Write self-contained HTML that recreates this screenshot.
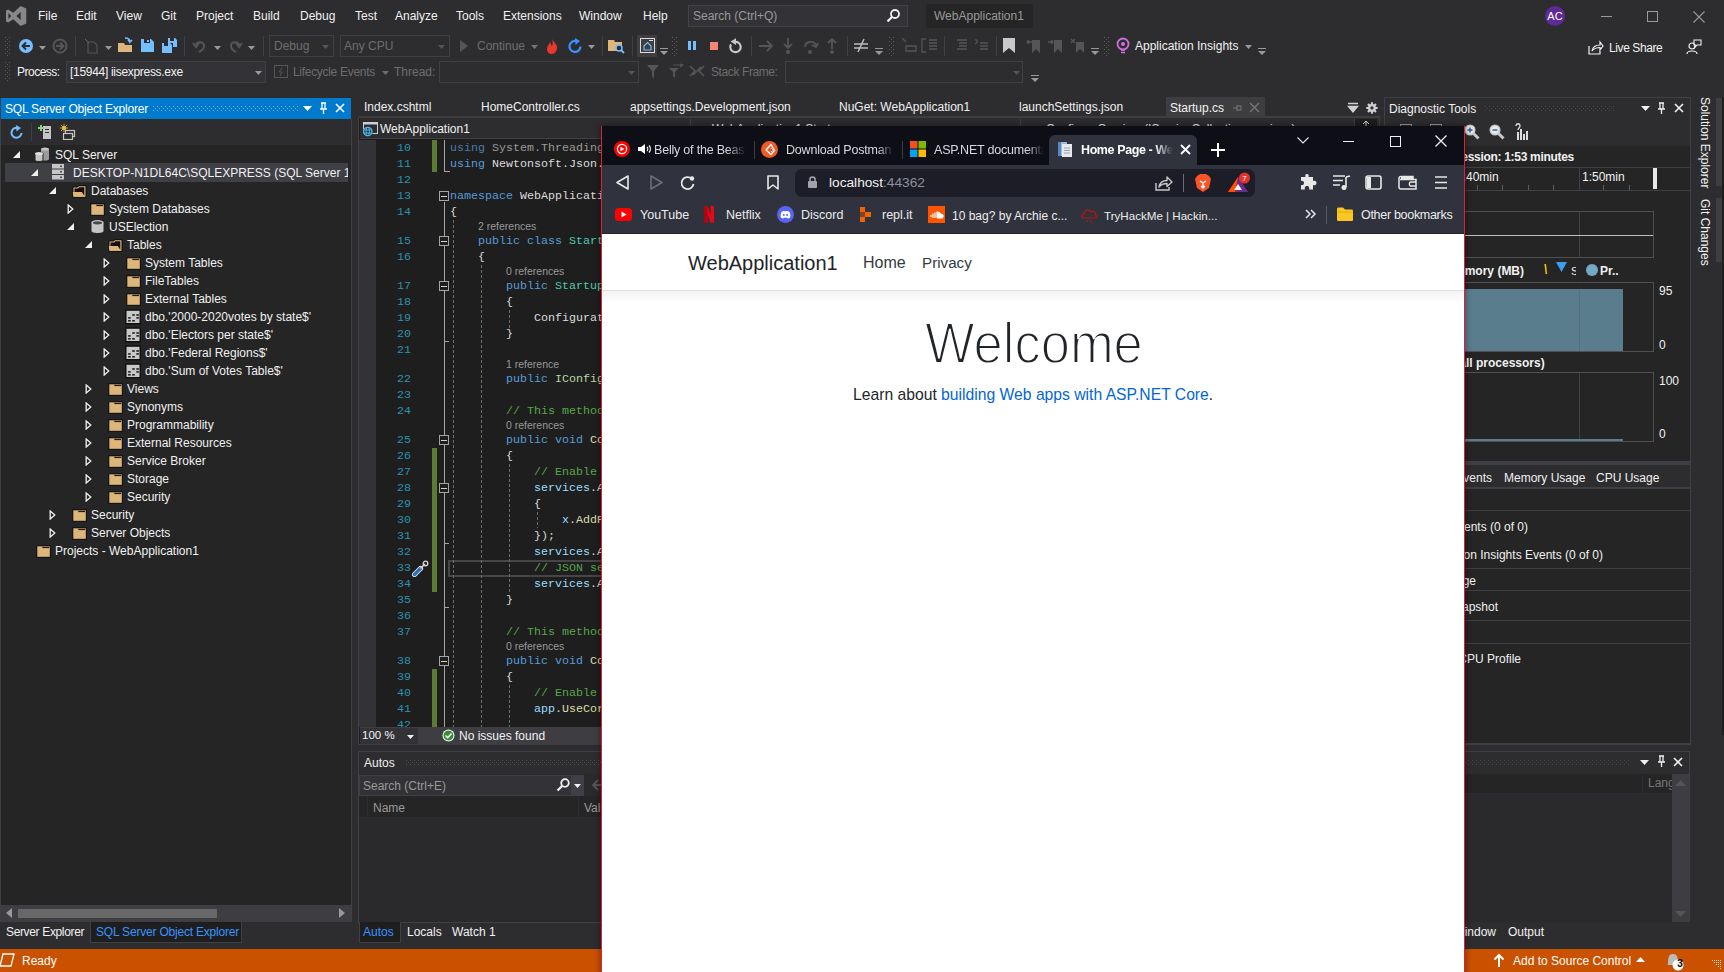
<!DOCTYPE html><html><head><meta charset="utf-8"><title>VS</title><style>
*{margin:0;padding:0;box-sizing:border-box}
html,body{width:1724px;height:972px;overflow:hidden;background:#2d2d30;font-family:"Liberation Sans",sans-serif}
.t{position:absolute;white-space:pre;font-family:"Liberation Sans",sans-serif}
.m{position:absolute;white-space:pre;font-family:"Liberation Mono",monospace}
.r{position:absolute}
</style></head><body>
<svg class="r" style="left:6px;top:6px;" width="21" height="20" viewBox="0 0 21 20"><path d="M14.6 0 L20.3 2.6 V17.4 L14.6 20 L7.3 13.3 L2.2 16.6 L0 15.4 V4.6 L2.2 3.4 L7.3 6.7 Z M14.6 6 L10.4 10 L14.6 14 Z M2.4 7 V13 L5.2 10 Z" fill="#878787" fill-rule="evenodd"/></svg>
<div class="t" style="left:38px;top:7.0px;height:18px;line-height:18px;font-size:12px;color:#f1f1f1;">File</div>
<div class="t" style="left:76px;top:7.0px;height:18px;line-height:18px;font-size:12px;color:#f1f1f1;">Edit</div>
<div class="t" style="left:116px;top:7.0px;height:18px;line-height:18px;font-size:12px;color:#f1f1f1;">View</div>
<div class="t" style="left:161px;top:7.0px;height:18px;line-height:18px;font-size:12px;color:#f1f1f1;">Git</div>
<div class="t" style="left:196px;top:7.0px;height:18px;line-height:18px;font-size:12px;color:#f1f1f1;">Project</div>
<div class="t" style="left:253px;top:7.0px;height:18px;line-height:18px;font-size:12px;color:#f1f1f1;">Build</div>
<div class="t" style="left:300px;top:7.0px;height:18px;line-height:18px;font-size:12px;color:#f1f1f1;">Debug</div>
<div class="t" style="left:355px;top:7.0px;height:18px;line-height:18px;font-size:12px;color:#f1f1f1;">Test</div>
<div class="t" style="left:395px;top:7.0px;height:18px;line-height:18px;font-size:12px;color:#f1f1f1;">Analyze</div>
<div class="t" style="left:456px;top:7.0px;height:18px;line-height:18px;font-size:12px;color:#f1f1f1;">Tools</div>
<div class="t" style="left:503px;top:7.0px;height:18px;line-height:18px;font-size:12px;color:#f1f1f1;">Extensions</div>
<div class="t" style="left:579px;top:7.0px;height:18px;line-height:18px;font-size:12px;color:#f1f1f1;">Window</div>
<div class="t" style="left:643px;top:7.0px;height:18px;line-height:18px;font-size:12px;color:#f1f1f1;">Help</div>
<div class="r" style="left:688px;top:5px;width:220px;height:22px;background:#333337;border:1px solid #434346"></div>
<div class="t" style="left:693px;top:7.0px;height:18px;line-height:18px;font-size:12px;color:#999999;">Search (Ctrl+Q)</div>
<svg class="r" style="left:885px;top:8px;" width="16" height="16" viewBox="0 0 16 16"><circle cx="10" cy="6" r="4" fill="none" stroke="#f1f1f1" stroke-width="1.8"/><path d="M7.2 8.8 L2.5 13.5" stroke="#f1f1f1" stroke-width="2.2"/></svg>
<div class="r" style="left:926px;top:4px;width:107px;height:24px;background:#252526;"></div>
<div class="t" style="left:934px;top:7.0px;height:18px;line-height:18px;font-size:12px;color:#999999;">WebApplication1</div>
<div class="r" style="left:1545px;top:6px;width:20px;height:20px;border-radius:10px;background:#5f2a96"></div>
<div class="t" style="left:1545px;top:7.5px;height:17px;line-height:17px;font-size:11px;color:#ffffff;width:20px;text-align:center">AC</div>
<div class="r" style="left:1601px;top:16px;width:11px;height:1px;background:#999;"></div>
<div class="r" style="left:1647px;top:11px;width:11px;height:11px;background:transparent;border:1px solid #999"></div>
<svg class="r" style="left:1693px;top:11px;" width="12" height="12" viewBox="0 0 12 12"><path d="M0.5 0.5 L11.5 11.5 M11.5 0.5 L0.5 11.5" stroke="#999" stroke-width="1.1"/></svg>
<svg class="r" style="left:5px;top:37px;" width="5" height="20" viewBox="0 0 5 20"><defs><pattern id="g1" width="4" height="4" patternUnits="userSpaceOnUse"><rect x="0" y="0" width="1" height="1" fill="#5a5a5e"/><rect x="2" y="2" width="1" height="1" fill="#5a5a5e"/></pattern></defs><rect width="5" height="20" fill="url(#g1)"/></svg>
<svg class="r" style="left:18px;top:38px;" width="16" height="16" viewBox="0 0 16 16"><circle cx="8" cy="8" r="7" fill="#75beff"/><path d="M12 8 H5 M8 4.5 L4.5 8 L8 11.5" stroke="#2d2d30" stroke-width="2" fill="none"/></svg>
<svg class="r" style="left:39px;top:46px;" width="7" height="4" viewBox="0 0 7 4"><path d="M0 0 H7 L3.5 4 Z" fill="#999"/></svg>
<svg class="r" style="left:52px;top:38px;" width="16" height="16" viewBox="0 0 16 16"><circle cx="8" cy="8" r="6.5" fill="none" stroke="#555" stroke-width="2"/><path d="M4 8 H11 M8 4.5 L11.5 8 L8 11.5" stroke="#555" stroke-width="2" fill="none"/></svg>
<div class="r" style="left:75px;top:36px;width:1px;height:20px;background:#3f3f46;"></div>
<svg class="r" style="left:83px;top:38px;" width="16" height="16" viewBox="0 0 16 16"><path d="M5 4 H11 L14 7 V15 H5 Z" fill="none" stroke="#555" stroke-width="1.2"/><path d="M2 1 L6 5" stroke="#666"/></svg>
<svg class="r" style="left:105px;top:46px;" width="7" height="4" viewBox="0 0 7 4"><path d="M0 0 H7 L3.5 4 Z" fill="#999"/></svg>
<svg class="r" style="left:117px;top:37px;" width="18" height="17" viewBox="0 0 18 17"><path d="M1 6 H7 L8 8 H15 V15 H1 Z" fill="#dcb67a"/><path d="M8 1 C11 1 13 2 13 5 L15 3 M13 5 L11 3" stroke="#75beff" stroke-width="1.6" fill="none"/></svg>
<svg class="r" style="left:140px;top:38px;" width="15" height="15" viewBox="0 0 15 15"><path d="M1 1 H11 L14 4 V14 H1 Z" fill="#75beff"/><rect x="4" y="1" width="6" height="4" fill="#2d2d30"/><rect x="7" y="2" width="2" height="2" fill="#75beff"/></svg>
<svg class="r" style="left:161px;top:37px;" width="17" height="17" viewBox="0 0 17 17"><path d="M1 6 H9 L11 8 V16 H1 Z" fill="#75beff"/><path d="M7 1 H14 L16 3 V10 H12 V6 H7 Z" fill="#75beff"/><rect x="3" y="6" width="4" height="3" fill="#2d2d30"/><rect x="9" y="1" width="4" height="3" fill="#2d2d30"/></svg>
<div class="r" style="left:184px;top:36px;width:1px;height:20px;background:#3f3f46;"></div>
<svg class="r" style="left:192px;top:38px;" width="16" height="16" viewBox="0 0 16 16"><path d="M4 8 C4 3 12 3 12 8 C12 11 9 13 7 14" stroke="#555" stroke-width="2" fill="none"/><path d="M1 5 L4 9 L7 5" stroke="#555" stroke-width="2" fill="none"/></svg>
<svg class="r" style="left:214px;top:46px;" width="7" height="4" viewBox="0 0 7 4"><path d="M0 0 H7 L3.5 4 Z" fill="#999"/></svg>
<svg class="r" style="left:227px;top:38px;" width="16" height="16" viewBox="0 0 16 16"><path d="M12 8 C12 3 4 3 4 8 C4 11 7 13 9 14" stroke="#555" stroke-width="2" fill="none"/><path d="M9 5 L12 9 L15 5" stroke="#555" stroke-width="2" fill="none"/></svg>
<svg class="r" style="left:248px;top:46px;" width="7" height="4" viewBox="0 0 7 4"><path d="M0 0 H7 L3.5 4 Z" fill="#999"/></svg>
<div class="r" style="left:263px;top:36px;width:1px;height:20px;background:#3f3f46;"></div>
<div class="r" style="left:269px;top:35px;width:65px;height:22px;background:#2d2d30;border:1px solid #3f3f46"></div>
<div class="t" style="left:274px;top:37.0px;height:18px;line-height:18px;font-size:12px;color:#6d6d6d;">Debug</div>
<svg class="r" style="left:322px;top:45px;" width="7" height="4" viewBox="0 0 7 4"><path d="M0 0 H7 L3.5 4 Z" fill="#555"/></svg>
<div class="r" style="left:340px;top:35px;width:110px;height:22px;background:#2d2d30;border:1px solid #3f3f46"></div>
<div class="t" style="left:344px;top:37.0px;height:18px;line-height:18px;font-size:12px;color:#6d6d6d;">Any CPU</div>
<svg class="r" style="left:438px;top:45px;" width="7" height="4" viewBox="0 0 7 4"><path d="M0 0 H7 L3.5 4 Z" fill="#555"/></svg>
<svg class="r" style="left:459px;top:39px;" width="10" height="14" viewBox="0 0 10 14"><path d="M1 1 L9 7 L1 13 Z" fill="#555"/></svg>
<div class="t" style="left:477px;top:37.0px;height:18px;line-height:18px;font-size:12px;color:#6d6d6d;">Continue</div>
<svg class="r" style="left:531px;top:45px;" width="7" height="4" viewBox="0 0 7 4"><path d="M0 0 H7 L3.5 4 Z" fill="#777"/></svg>
<svg class="r" style="left:544px;top:37px;" width="16" height="18" viewBox="0 0 16 18"><path d="M8 1 C9 5 14 7 13 12 C12.5 15 10 17 8 17 C5 17 3 15 3 12 C3 9 5 8 6 5 C7 7 7 8 8 9 C9 7 9 4 8 1 Z" fill="#e8372c"/></svg>
<svg class="r" style="left:567px;top:38px;" width="17" height="17" viewBox="0 0 17 17"><path d="M13.5 8.5 A5.5 5.5 0 1 1 10 3.3" stroke="#3794ff" stroke-width="2.2" fill="none"/><path d="M8 0 L13 3 L8.5 7 Z" fill="#3794ff"/></svg>
<svg class="r" style="left:588px;top:45px;" width="7" height="4" viewBox="0 0 7 4"><path d="M0 0 H7 L3.5 4 Z" fill="#999"/></svg>
<div class="r" style="left:602px;top:36px;width:1px;height:20px;background:#3f3f46;"></div>
<svg class="r" style="left:607px;top:37px;" width="18" height="17" viewBox="0 0 18 17"><path d="M1 3 H7 L8 5 H15 V14 H1 Z" fill="#dcb67a"/><circle cx="12" cy="11" r="3" fill="#2d2d30" stroke="#75beff" stroke-width="1.5"/><path d="M14 13 L17 16" stroke="#75beff" stroke-width="1.8"/></svg>
<div class="r" style="left:632px;top:36px;width:1px;height:20px;background:#3f3f46;"></div>
<div class="r" style="left:637px;top:35px;width:20px;height:22px;background:#3e3e40;"></div>
<svg class="r" style="left:640px;top:38px;" width="15" height="15" viewBox="0 0 15 15"><rect x="0.5" y="0.5" width="14" height="14" fill="none" stroke="#ddd"/><path d="M4 8 L7.5 4.5 L11 8 V12 H4 Z" fill="none" stroke="#75beff" stroke-width="1.2"/><rect x="9" y="2" width="4" height="1" fill="#ddd"/></svg>
<svg class="r" style="left:660px;top:48px;" width="8" height="8" viewBox="0 0 8 8"><rect x="0" y="0" width="8" height="1" fill="#999"/><path d="M0 3 H8 L4 7 Z" fill="#999"/></svg>
<svg class="r" style="left:672px;top:37px;" width="5" height="20" viewBox="0 0 5 20"><defs><pattern id="g2" width="4" height="4" patternUnits="userSpaceOnUse"><rect x="0" y="0" width="1" height="1" fill="#5a5a5e"/><rect x="2" y="2" width="1" height="1" fill="#5a5a5e"/></pattern></defs><rect width="5" height="20" fill="url(#g2)"/></svg>
<div class="r" style="left:688px;top:41px;width:3px;height:9px;background:#75beff;"></div>
<div class="r" style="left:693px;top:41px;width:3px;height:9px;background:#75beff;"></div>
<div class="r" style="left:710px;top:42px;width:8px;height:8px;background:#f48771;"></div>
<svg class="r" style="left:727px;top:37px;" width="17" height="18" viewBox="0 0 17 18"><circle cx="8.5" cy="10" r="5.2" fill="none" stroke="#c8c8c8" stroke-width="2.2" stroke-dasharray="27 6" transform="rotate(-95 8.5 10)"/><path d="M3.5 4.6 L9 1.2 L9 8 Z" fill="#c8c8c8"/></svg>
<div class="r" style="left:751px;top:36px;width:1px;height:20px;background:#3f3f46;"></div>
<svg class="r" style="left:758px;top:39px;" width="16" height="14" viewBox="0 0 16 14"><path d="M1 7 H14 M9 2 L14 7 L9 12" stroke="#555" stroke-width="1.8" fill="none"/></svg>
<svg class="r" style="left:781px;top:37px;" width="14" height="18" viewBox="0 0 14 18"><path d="M7 1 V11 M3 7 L7 11 L11 7" stroke="#555" stroke-width="1.8" fill="none"/><circle cx="7" cy="15" r="2" fill="#555"/></svg>
<svg class="r" style="left:802px;top:37px;" width="17" height="18" viewBox="0 0 17 18"><path d="M3 10 C3 4 13 3 14 9 M10 8 L14 10 L16 6" stroke="#555" stroke-width="1.8" fill="none"/><circle cx="8" cy="15" r="2" fill="#555"/></svg>
<svg class="r" style="left:825px;top:37px;" width="14" height="18" viewBox="0 0 14 18"><path d="M7 12 V2 M3 6 L7 2 L11 6" stroke="#555" stroke-width="1.8" fill="none"/><circle cx="7" cy="15" r="2" fill="#555"/></svg>
<div class="r" style="left:847px;top:36px;width:1px;height:20px;background:#3f3f46;"></div>
<svg class="r" style="left:852px;top:37px;" width="18" height="17" viewBox="0 0 18 17"><path d="M2 7 H16 M2 11 H16 M6 15 L12 2" stroke="#bbb" stroke-width="1.5" fill="none"/></svg>
<svg class="r" style="left:875px;top:48px;" width="8" height="8" viewBox="0 0 8 8"><rect x="0" y="0" width="8" height="1" fill="#999"/><path d="M0 3 H8 L4 7 Z" fill="#999"/></svg>
<svg class="r" style="left:889px;top:37px;" width="5" height="20" viewBox="0 0 5 20"><defs><pattern id="g3" width="4" height="4" patternUnits="userSpaceOnUse"><rect x="0" y="0" width="1" height="1" fill="#5a5a5e"/><rect x="2" y="2" width="1" height="1" fill="#5a5a5e"/></pattern></defs><rect width="5" height="20" fill="url(#g3)"/></svg>
<svg class="r" style="left:900px;top:37px;" width="17" height="17" viewBox="0 0 17 17"><path d="M2 1 L6 5 M6 9 H16 V14 H6 Z" stroke="#555" stroke-width="1.3" fill="none"/></svg>
<svg class="r" style="left:921px;top:37px;" width="17" height="17" viewBox="0 0 17 17"><path d="M5 2 H1 V15 H5 M8 3 H16 M8 6 H16 M8 9 H16 M8 12 H16" stroke="#555" stroke-width="1.3" fill="none"/></svg>
<div class="r" style="left:944px;top:36px;width:1px;height:20px;background:#3f3f46;"></div>
<svg class="r" style="left:952px;top:37px;" width="17" height="17" viewBox="0 0 17 17"><path d="M5 3 H15 M7 6 H15 M7 9 H15 M5 12 H15" stroke="#555" stroke-width="1.3" fill="none"/></svg>
<svg class="r" style="left:973px;top:37px;" width="17" height="17" viewBox="0 0 17 17"><path d="M7 6 H15 M7 9 H15 M7 12 H15 M2 3 C5 2 5 6 2 7" stroke="#555" stroke-width="1.3" fill="none"/></svg>
<div class="r" style="left:996px;top:36px;width:1px;height:20px;background:#3f3f46;"></div>
<svg class="r" style="left:1003px;top:38px;" width="12" height="15" viewBox="0 0 12 15"><path d="M0 0 H12 V15 L6 10 L0 15 Z" fill="#c8c8c8"/></svg>
<svg class="r" style="left:1026px;top:38px;" width="16" height="15" viewBox="0 0 16 15"><path d="M6 2 V15 L10 11 L14 15 V2 Z" fill="#555"/><path d="M1 4 H6 M3 2 L1 4 L3 6" stroke="#555" stroke-width="1.3" fill="none"/></svg>
<svg class="r" style="left:1048px;top:38px;" width="16" height="15" viewBox="0 0 16 15"><path d="M6 2 V15 L10 11 L14 15 V2 Z" fill="#555"/><path d="M0 4 H5 M3 2 L5 4 L3 6" stroke="#555" stroke-width="1.3" fill="none"/></svg>
<svg class="r" style="left:1070px;top:38px;" width="16" height="15" viewBox="0 0 16 15"><path d="M6 4 V15 L10 11 L14 15 V4 Z" fill="#555"/><path d="M1 1 L5 5 M5 1 L1 5" stroke="#555" stroke-width="1.3" fill="none"/></svg>
<svg class="r" style="left:1091px;top:48px;" width="8" height="8" viewBox="0 0 8 8"><rect x="0" y="0" width="8" height="1" fill="#999"/><path d="M0 3 H8 L4 7 Z" fill="#999"/></svg>
<svg class="r" style="left:1104px;top:37px;" width="5" height="20" viewBox="0 0 5 20"><defs><pattern id="g4" width="4" height="4" patternUnits="userSpaceOnUse"><rect x="0" y="0" width="1" height="1" fill="#5a5a5e"/><rect x="2" y="2" width="1" height="1" fill="#5a5a5e"/></pattern></defs><rect width="5" height="20" fill="url(#g4)"/></svg>
<svg class="r" style="left:1116px;top:37px;" width="14" height="18" viewBox="0 0 14 18"><circle cx="7" cy="7" r="5.5" fill="none" stroke="#d16fe0" stroke-width="1.8"/><circle cx="7" cy="7" r="2" fill="#d16fe0"/><path d="M5 13 H9 M5 15.5 H9" stroke="#d16fe0" stroke-width="1.5"/></svg>
<div class="t" style="left:1135px;top:37.0px;height:18px;line-height:18px;font-size:12px;color:#f1f1f1;">Application Insights</div>
<svg class="r" style="left:1245px;top:45px;" width="7" height="4" viewBox="0 0 7 4"><path d="M0 0 H7 L3.5 4 Z" fill="#999"/></svg>
<svg class="r" style="left:1258px;top:48px;" width="8" height="8" viewBox="0 0 8 8"><rect x="0" y="0" width="8" height="1" fill="#999"/><path d="M0 3 H8 L4 7 Z" fill="#999"/></svg>
<svg class="r" style="left:1588px;top:40px;" width="16" height="15" viewBox="0 0 16 15"><path d="M1 6 V14 H12 V11" stroke="#f1f1f1" stroke-width="1.2" fill="none"/><path d="M4 11 C5 6 9 5 12 5 V2 L15 6 L12 10 V7.5 C9 7.5 6 8.5 4 11 Z" fill="none" stroke="#f1f1f1" stroke-width="1.2"/></svg>
<div class="t" style="left:1609px;top:39.0px;height:18px;line-height:18px;font-size:12px;color:#f1f1f1;letter-spacing:-0.4px">Live Share</div>
<svg class="r" style="left:1686px;top:39px;" width="16" height="16" viewBox="0 0 16 16"><circle cx="6" cy="7" r="3" fill="none" stroke="#f1f1f1" stroke-width="1.2"/><path d="M1 15 C1 11 11 11 11 15" stroke="#f1f1f1" stroke-width="1.2" fill="none"/><path d="M8 1 H15 V6 H11 L9 8 V6 H8 Z" fill="none" stroke="#f1f1f1" stroke-width="1.1"/></svg>
<svg class="r" style="left:5px;top:62px;" width="5" height="20" viewBox="0 0 5 20"><defs><pattern id="g5" width="4" height="4" patternUnits="userSpaceOnUse"><rect x="0" y="0" width="1" height="1" fill="#5a5a5e"/><rect x="2" y="2" width="1" height="1" fill="#5a5a5e"/></pattern></defs><rect width="5" height="20" fill="url(#g5)"/></svg>
<div class="t" style="left:17px;top:63.0px;height:18px;line-height:18px;font-size:12px;color:#f1f1f1;letter-spacing:-0.5px">Process:</div>
<div class="r" style="left:66px;top:61px;width:200px;height:22px;background:#333337;border:1px solid #3f3f46"></div>
<div class="t" style="left:70px;top:63.0px;height:18px;line-height:18px;font-size:12px;color:#f1f1f1;letter-spacing:-0.3px">[15944] iisexpress.exe</div>
<svg class="r" style="left:255px;top:71px;" width="7" height="4" viewBox="0 0 7 4"><path d="M0 0 H7 L3.5 4 Z" fill="#999"/></svg>
<svg class="r" style="left:274px;top:65px;" width="14" height="13" viewBox="0 0 14 13"><rect x="0.5" y="0.5" width="13" height="12" fill="none" stroke="#555"/><path d="M8 3 L5 7 H8 L6 11" stroke="#555" fill="none"/></svg>
<div class="t" style="left:293px;top:63.0px;height:18px;line-height:18px;font-size:12px;color:#6d6d6d;letter-spacing:-0.3px">Lifecycle Events</div>
<svg class="r" style="left:382px;top:71px;" width="7" height="4" viewBox="0 0 7 4"><path d="M0 0 H7 L3.5 4 Z" fill="#6d6d6d"/></svg>
<div class="t" style="left:394px;top:63.0px;height:18px;line-height:18px;font-size:12px;color:#6d6d6d;">Thread:</div>
<div class="r" style="left:439px;top:61px;width:200px;height:22px;background:#2d2d30;border:1px solid #3f3f46"></div>
<svg class="r" style="left:628px;top:71px;" width="7" height="4" viewBox="0 0 7 4"><path d="M0 0 H7 L3.5 4 Z" fill="#555"/></svg>
<svg class="r" style="left:646px;top:64px;" width="14" height="16" viewBox="0 0 14 16"><path d="M1 1 H13 L8 7 V15 L6 12 V7 Z" fill="#555"/></svg>
<svg class="r" style="left:668px;top:63px;" width="16" height="16" viewBox="0 0 16 16"><path d="M1 5 H11 L7 9 V15 L5 13 V9 Z" fill="#555"/><path d="M5 2 H15 M12 1 L15 2 L12 4" stroke="#555" stroke-width="1.2" fill="none"/></svg>
<svg class="r" style="left:689px;top:65px;" width="16" height="12" viewBox="0 0 16 12"><path d="M1 1 L6 6 L1 11 M15 1 L10 6 L15 11 M4 10 L12 2" stroke="#555" stroke-width="1.6" fill="none"/></svg>
<div class="t" style="left:711px;top:63.0px;height:18px;line-height:18px;font-size:12px;color:#6d6d6d;letter-spacing:-0.4px">Stack Frame:</div>
<div class="r" style="left:785px;top:61px;width:238px;height:22px;background:#2d2d30;border:1px solid #3f3f46"></div>
<svg class="r" style="left:1013px;top:71px;" width="7" height="4" viewBox="0 0 7 4"><path d="M0 0 H7 L3.5 4 Z" fill="#555"/></svg>
<svg class="r" style="left:1031px;top:75px;" width="8" height="8" viewBox="0 0 8 8"><rect x="0" y="0" width="8" height="1" fill="#999"/><path d="M0 3 H8 L4 7 Z" fill="#999"/></svg>
<div class="r" style="left:1px;top:98px;width:350px;height:21px;background:#007acc;"></div>
<div class="t" style="left:5px;top:99.5px;height:18px;line-height:18px;font-size:12px;color:#ffffff;letter-spacing:-0.2px">SQL Server Object Explorer</div>
<svg class="r" style="left:153px;top:106px;" width="145" height="5" viewBox="0 0 145 5"><defs><pattern id="g6" width="4" height="4" patternUnits="userSpaceOnUse"><rect x="0" y="0" width="1" height="1" fill="#6aaee0"/><rect x="2" y="2" width="1" height="1" fill="#6aaee0"/></pattern></defs><rect width="145" height="5" fill="url(#g6)"/></svg>
<svg class="r" style="left:303px;top:106px;" width="9" height="5" viewBox="0 0 9 5"><path d="M0 0 H9 L4.5 5 Z" fill="#fff"/></svg>
<svg class="r" style="left:319px;top:102px;" width="9" height="13" viewBox="0 0 9 13"><path d="M2 1 H7 M3 1 V7 M6 1 V7 M1 7 H8 M4.5 7 V12" stroke="#fff" stroke-width="1.3" fill="none"/></svg>
<svg class="r" style="left:335px;top:103px;" width="10" height="10" viewBox="0 0 10 10"><path d="M1 1 L9 9 M9 1 L1 9" stroke="#fff" stroke-width="1.6"/></svg>
<div class="r" style="left:1px;top:119px;width:350px;height:26px;background:#2d2d30;"></div>
<svg class="r" style="left:9px;top:125px;" width="15" height="15" viewBox="0 0 15 15"><path d="M12.5 8 A5 5 0 1 1 9 3" stroke="#75beff" stroke-width="2" fill="none"/><path d="M7 0 L12 3 L7.5 6.5 Z" fill="#75beff"/></svg>
<div class="r" style="left:31px;top:123px;width:1px;height:18px;background:#3f3f46;"></div>
<svg class="r" style="left:38px;top:124px;" width="14" height="16" viewBox="0 0 14 16"><rect x="5" y="2" width="8" height="13" fill="#c5c5c5"/><rect x="7" y="5" width="4" height="1" fill="#2d2d30"/><rect x="7" y="8" width="4" height="1" fill="#2d2d30"/><path d="M0 4 H6 M3 1 V7" stroke="#89d185" stroke-width="2"/></svg>
<svg class="r" style="left:60px;top:124px;" width="16" height="16" viewBox="0 0 16 16"><circle cx="4" cy="4" r="2" fill="#f0c040"/><path d="M4 0 V8 M0 4 H8 M1 1 L7 7 M7 1 L1 7" stroke="#f0c040" stroke-width=".8"/><rect x="5.5" y="6.5" width="9" height="6" fill="none" stroke="#c5c5c5" stroke-width="1.2"/><rect x="3.5" y="9.5" width="9" height="6" fill="#2d2d30" stroke="#c5c5c5" stroke-width="1.2"/></svg>
<div class="r" style="left:1px;top:145px;width:350px;height:760px;background:#252526;"></div>
<div class="r" style="left:0px;top:98px;width:1px;height:845px;background:#3f3f46;"></div>
<div class="r" style="left:351px;top:119px;width:1px;height:803px;background:#3f3f46;"></div>
<div class="r" style="left:5px;top:163px;width:343px;height:19px;background:#3f3f46;"></div>
<svg class="r" style="left:13px;top:151px;" width="8" height="8" viewBox="0 0 8 8"><path d="M7 0 V7 H0 Z" fill="#f0f0f0"/></svg>
<svg class="r" style="left:34px;top:146px;" width="16" height="16" viewBox="0 0 16 16"><path d="M7 3 V13 C7 15 15 15 15 13 V3 Z" fill="#9a9a9a"/><ellipse cx="11" cy="3" rx="4" ry="1.6" fill="#c5c5c5"/><path d="M1 7 V14 C1 16 9 16 9 14 V7 Z" fill="#c5c5c5" stroke="#252526" stroke-width="1"/><ellipse cx="5" cy="7.5" rx="4" ry="1.6" fill="#e0e0e0"/></svg>
<div class="t" style="left:55px;top:146.0px;height:18px;line-height:18px;font-size:12px;color:#f1f1f1;">SQL Server</div>
<svg class="r" style="left:31px;top:169px;" width="8" height="8" viewBox="0 0 8 8"><path d="M7 0 V7 H0 Z" fill="#f0f0f0"/></svg>
<svg class="r" style="left:52px;top:164px;" width="12" height="16" viewBox="0 0 12 16"><rect x="0" y="0" width="12" height="4.5" fill="#c5c5c5"/><rect x="0" y="5.5" width="12" height="4.5" fill="#c5c5c5"/><rect x="0" y="11" width="12" height="4.5" fill="#c5c5c5"/><rect x="8" y="1.5" width="2" height="1.5" fill="#555"/><rect x="8" y="7" width="2" height="1.5" fill="#555"/><rect x="8" y="12.5" width="2" height="1.5" fill="#555"/></svg>
<div class="t" style="left:73px;top:164.0px;height:18px;line-height:18px;font-size:12px;color:#f1f1f1;width:275px;overflow:hidden">DESKTOP-N1DL64C\SQLEXPRESS (SQL Server 15.0.2000 - DESKTOP-N1DL64C\Archie)</div>
<svg class="r" style="left:49px;top:187px;" width="8" height="8" viewBox="0 0 8 8"><path d="M7 0 V7 H0 Z" fill="#f0f0f0"/></svg>
<svg class="r" style="left:72px;top:185px;" width="15" height="13" viewBox="0 0 15 13"><path d="M0.5 1.5 H5 L6.5 0.2 H14.5 V12.8 H0.5 Z" fill="#111"/><path d="M1.5 2.5 H5.5 L7 1.2 H13.5 V11.8 H1.5 Z" fill="#dcb67a"/><path d="M2.5 3.5 H6 L7.5 2.2 H12.3 V10.8 H2.5 Z" fill="#1a0a14"/><path d="M0.8 7 H9.8 L13 11.8 H1.5 Z" fill="#dcb67a"/></svg>
<div class="t" style="left:91px;top:182.0px;height:18px;line-height:18px;font-size:12px;color:#f1f1f1;">Databases</div>
<svg class="r" style="left:67px;top:204px;" width="7" height="10" viewBox="0 0 7 10"><path d="M1.2 1 L5.8 5 L1.2 9 Z" fill="none" stroke="#f0f0f0" stroke-width="1.3"/></svg>
<svg class="r" style="left:90px;top:203px;" width="15" height="13" viewBox="0 0 15 13"><rect x="0.3" y="0.2" width="14.5" height="12.6" fill="#111"/><rect x="1.3" y="1.3" width="12.5" height="10.5" fill="#dcb67a"/><rect x="6.3" y="1.8" width="6.8" height="1.3" fill="#2a1a08"/></svg>
<div class="t" style="left:109px;top:200.0px;height:18px;line-height:18px;font-size:12px;color:#f1f1f1;">System Databases</div>
<svg class="r" style="left:67px;top:223px;" width="8" height="8" viewBox="0 0 8 8"><path d="M7 0 V7 H0 Z" fill="#f0f0f0"/></svg>
<svg class="r" style="left:90.5px;top:220px;" width="13" height="14" viewBox="0 0 13 14"><path d="M0.5 2.5 V11 C0.5 13.6 12.5 13.6 12.5 11 V2.5 Z" fill="#c5c5c5"/><ellipse cx="6.5" cy="2.5" rx="6" ry="2.4" fill="#c5c5c5"/><ellipse cx="6.5" cy="2.8" rx="4.6" ry="1.6" fill="#4a4a4a"/></svg>
<div class="t" style="left:109px;top:218.0px;height:18px;line-height:18px;font-size:12px;color:#f1f1f1;">USElection</div>
<svg class="r" style="left:85px;top:241px;" width="8" height="8" viewBox="0 0 8 8"><path d="M7 0 V7 H0 Z" fill="#f0f0f0"/></svg>
<svg class="r" style="left:108px;top:239px;" width="15" height="13" viewBox="0 0 15 13"><path d="M0.5 1.5 H5 L6.5 0.2 H14.5 V12.8 H0.5 Z" fill="#111"/><path d="M1.5 2.5 H5.5 L7 1.2 H13.5 V11.8 H1.5 Z" fill="#dcb67a"/><path d="M2.5 3.5 H6 L7.5 2.2 H12.3 V10.8 H2.5 Z" fill="#1a0a14"/><path d="M0.8 7 H9.8 L13 11.8 H1.5 Z" fill="#dcb67a"/></svg>
<div class="t" style="left:127px;top:236.0px;height:18px;line-height:18px;font-size:12px;color:#f1f1f1;">Tables</div>
<svg class="r" style="left:103px;top:258px;" width="7" height="10" viewBox="0 0 7 10"><path d="M1.2 1 L5.8 5 L1.2 9 Z" fill="none" stroke="#f0f0f0" stroke-width="1.3"/></svg>
<svg class="r" style="left:126px;top:257px;" width="15" height="13" viewBox="0 0 15 13"><rect x="0.3" y="0.2" width="14.5" height="12.6" fill="#111"/><rect x="1.3" y="1.3" width="12.5" height="10.5" fill="#dcb67a"/><rect x="6.3" y="1.8" width="6.8" height="1.3" fill="#2a1a08"/></svg>
<div class="t" style="left:145px;top:254.0px;height:18px;line-height:18px;font-size:12px;color:#f1f1f1;">System Tables</div>
<svg class="r" style="left:103px;top:276px;" width="7" height="10" viewBox="0 0 7 10"><path d="M1.2 1 L5.8 5 L1.2 9 Z" fill="none" stroke="#f0f0f0" stroke-width="1.3"/></svg>
<svg class="r" style="left:126px;top:275px;" width="15" height="13" viewBox="0 0 15 13"><rect x="0.3" y="0.2" width="14.5" height="12.6" fill="#111"/><rect x="1.3" y="1.3" width="12.5" height="10.5" fill="#dcb67a"/><rect x="6.3" y="1.8" width="6.8" height="1.3" fill="#2a1a08"/></svg>
<div class="t" style="left:145px;top:272.0px;height:18px;line-height:18px;font-size:12px;color:#f1f1f1;">FileTables</div>
<svg class="r" style="left:103px;top:294px;" width="7" height="10" viewBox="0 0 7 10"><path d="M1.2 1 L5.8 5 L1.2 9 Z" fill="none" stroke="#f0f0f0" stroke-width="1.3"/></svg>
<svg class="r" style="left:126px;top:293px;" width="15" height="13" viewBox="0 0 15 13"><rect x="0.3" y="0.2" width="14.5" height="12.6" fill="#111"/><rect x="1.3" y="1.3" width="12.5" height="10.5" fill="#dcb67a"/><rect x="6.3" y="1.8" width="6.8" height="1.3" fill="#2a1a08"/></svg>
<div class="t" style="left:145px;top:290.0px;height:18px;line-height:18px;font-size:12px;color:#f1f1f1;">External Tables</div>
<svg class="r" style="left:103px;top:312px;" width="7" height="10" viewBox="0 0 7 10"><path d="M1.2 1 L5.8 5 L1.2 9 Z" fill="none" stroke="#f0f0f0" stroke-width="1.3"/></svg>
<svg class="r" style="left:125px;top:309px;" width="16" height="16" viewBox="0 0 16 16"><rect x="0" y="0.3" width="16" height="15.2" fill="#111"/><rect x="1.5" y="1.8" width="13" height="12.2" fill="#c8c8c8"/><rect x="7.2" y="5.2" width="2.6" height="1.6" fill="#222"/><rect x="11.3" y="5.2" width="2.6" height="1.6" fill="#222"/><rect x="3.1" y="8.1" width="2.6" height="1.6" fill="#222"/><rect x="11.3" y="8.1" width="2.6" height="1.6" fill="#222"/><rect x="3.1" y="11" width="2.6" height="1.6" fill="#222"/><rect x="7.2" y="11" width="2.6" height="1.6" fill="#222"/></svg>
<div class="t" style="left:145px;top:308.0px;height:18px;line-height:18px;font-size:12px;color:#f1f1f1;">dbo.'2000-2020votes by state$'</div>
<svg class="r" style="left:103px;top:330px;" width="7" height="10" viewBox="0 0 7 10"><path d="M1.2 1 L5.8 5 L1.2 9 Z" fill="none" stroke="#f0f0f0" stroke-width="1.3"/></svg>
<svg class="r" style="left:125px;top:327px;" width="16" height="16" viewBox="0 0 16 16"><rect x="0" y="0.3" width="16" height="15.2" fill="#111"/><rect x="1.5" y="1.8" width="13" height="12.2" fill="#c8c8c8"/><rect x="7.2" y="5.2" width="2.6" height="1.6" fill="#222"/><rect x="11.3" y="5.2" width="2.6" height="1.6" fill="#222"/><rect x="3.1" y="8.1" width="2.6" height="1.6" fill="#222"/><rect x="11.3" y="8.1" width="2.6" height="1.6" fill="#222"/><rect x="3.1" y="11" width="2.6" height="1.6" fill="#222"/><rect x="7.2" y="11" width="2.6" height="1.6" fill="#222"/></svg>
<div class="t" style="left:145px;top:326.0px;height:18px;line-height:18px;font-size:12px;color:#f1f1f1;">dbo.'Electors per state$'</div>
<svg class="r" style="left:103px;top:348px;" width="7" height="10" viewBox="0 0 7 10"><path d="M1.2 1 L5.8 5 L1.2 9 Z" fill="none" stroke="#f0f0f0" stroke-width="1.3"/></svg>
<svg class="r" style="left:125px;top:345px;" width="16" height="16" viewBox="0 0 16 16"><rect x="0" y="0.3" width="16" height="15.2" fill="#111"/><rect x="1.5" y="1.8" width="13" height="12.2" fill="#c8c8c8"/><rect x="7.2" y="5.2" width="2.6" height="1.6" fill="#222"/><rect x="11.3" y="5.2" width="2.6" height="1.6" fill="#222"/><rect x="3.1" y="8.1" width="2.6" height="1.6" fill="#222"/><rect x="11.3" y="8.1" width="2.6" height="1.6" fill="#222"/><rect x="3.1" y="11" width="2.6" height="1.6" fill="#222"/><rect x="7.2" y="11" width="2.6" height="1.6" fill="#222"/></svg>
<div class="t" style="left:145px;top:344.0px;height:18px;line-height:18px;font-size:12px;color:#f1f1f1;">dbo.'Federal Regions$'</div>
<svg class="r" style="left:103px;top:366px;" width="7" height="10" viewBox="0 0 7 10"><path d="M1.2 1 L5.8 5 L1.2 9 Z" fill="none" stroke="#f0f0f0" stroke-width="1.3"/></svg>
<svg class="r" style="left:125px;top:363px;" width="16" height="16" viewBox="0 0 16 16"><rect x="0" y="0.3" width="16" height="15.2" fill="#111"/><rect x="1.5" y="1.8" width="13" height="12.2" fill="#c8c8c8"/><rect x="7.2" y="5.2" width="2.6" height="1.6" fill="#222"/><rect x="11.3" y="5.2" width="2.6" height="1.6" fill="#222"/><rect x="3.1" y="8.1" width="2.6" height="1.6" fill="#222"/><rect x="11.3" y="8.1" width="2.6" height="1.6" fill="#222"/><rect x="3.1" y="11" width="2.6" height="1.6" fill="#222"/><rect x="7.2" y="11" width="2.6" height="1.6" fill="#222"/></svg>
<div class="t" style="left:145px;top:362.0px;height:18px;line-height:18px;font-size:12px;color:#f1f1f1;">dbo.'Sum of Votes Table$'</div>
<svg class="r" style="left:85px;top:384px;" width="7" height="10" viewBox="0 0 7 10"><path d="M1.2 1 L5.8 5 L1.2 9 Z" fill="none" stroke="#f0f0f0" stroke-width="1.3"/></svg>
<svg class="r" style="left:108px;top:383px;" width="15" height="13" viewBox="0 0 15 13"><rect x="0.3" y="0.2" width="14.5" height="12.6" fill="#111"/><rect x="1.3" y="1.3" width="12.5" height="10.5" fill="#dcb67a"/><rect x="6.3" y="1.8" width="6.8" height="1.3" fill="#2a1a08"/></svg>
<div class="t" style="left:127px;top:380.0px;height:18px;line-height:18px;font-size:12px;color:#f1f1f1;">Views</div>
<svg class="r" style="left:85px;top:402px;" width="7" height="10" viewBox="0 0 7 10"><path d="M1.2 1 L5.8 5 L1.2 9 Z" fill="none" stroke="#f0f0f0" stroke-width="1.3"/></svg>
<svg class="r" style="left:108px;top:401px;" width="15" height="13" viewBox="0 0 15 13"><rect x="0.3" y="0.2" width="14.5" height="12.6" fill="#111"/><rect x="1.3" y="1.3" width="12.5" height="10.5" fill="#dcb67a"/><rect x="6.3" y="1.8" width="6.8" height="1.3" fill="#2a1a08"/></svg>
<div class="t" style="left:127px;top:398.0px;height:18px;line-height:18px;font-size:12px;color:#f1f1f1;">Synonyms</div>
<svg class="r" style="left:85px;top:420px;" width="7" height="10" viewBox="0 0 7 10"><path d="M1.2 1 L5.8 5 L1.2 9 Z" fill="none" stroke="#f0f0f0" stroke-width="1.3"/></svg>
<svg class="r" style="left:108px;top:419px;" width="15" height="13" viewBox="0 0 15 13"><rect x="0.3" y="0.2" width="14.5" height="12.6" fill="#111"/><rect x="1.3" y="1.3" width="12.5" height="10.5" fill="#dcb67a"/><rect x="6.3" y="1.8" width="6.8" height="1.3" fill="#2a1a08"/></svg>
<div class="t" style="left:127px;top:416.0px;height:18px;line-height:18px;font-size:12px;color:#f1f1f1;">Programmability</div>
<svg class="r" style="left:85px;top:438px;" width="7" height="10" viewBox="0 0 7 10"><path d="M1.2 1 L5.8 5 L1.2 9 Z" fill="none" stroke="#f0f0f0" stroke-width="1.3"/></svg>
<svg class="r" style="left:108px;top:437px;" width="15" height="13" viewBox="0 0 15 13"><rect x="0.3" y="0.2" width="14.5" height="12.6" fill="#111"/><rect x="1.3" y="1.3" width="12.5" height="10.5" fill="#dcb67a"/><rect x="6.3" y="1.8" width="6.8" height="1.3" fill="#2a1a08"/></svg>
<div class="t" style="left:127px;top:434.0px;height:18px;line-height:18px;font-size:12px;color:#f1f1f1;">External Resources</div>
<svg class="r" style="left:85px;top:456px;" width="7" height="10" viewBox="0 0 7 10"><path d="M1.2 1 L5.8 5 L1.2 9 Z" fill="none" stroke="#f0f0f0" stroke-width="1.3"/></svg>
<svg class="r" style="left:108px;top:455px;" width="15" height="13" viewBox="0 0 15 13"><rect x="0.3" y="0.2" width="14.5" height="12.6" fill="#111"/><rect x="1.3" y="1.3" width="12.5" height="10.5" fill="#dcb67a"/><rect x="6.3" y="1.8" width="6.8" height="1.3" fill="#2a1a08"/></svg>
<div class="t" style="left:127px;top:452.0px;height:18px;line-height:18px;font-size:12px;color:#f1f1f1;">Service Broker</div>
<svg class="r" style="left:85px;top:474px;" width="7" height="10" viewBox="0 0 7 10"><path d="M1.2 1 L5.8 5 L1.2 9 Z" fill="none" stroke="#f0f0f0" stroke-width="1.3"/></svg>
<svg class="r" style="left:108px;top:473px;" width="15" height="13" viewBox="0 0 15 13"><rect x="0.3" y="0.2" width="14.5" height="12.6" fill="#111"/><rect x="1.3" y="1.3" width="12.5" height="10.5" fill="#dcb67a"/><rect x="6.3" y="1.8" width="6.8" height="1.3" fill="#2a1a08"/></svg>
<div class="t" style="left:127px;top:470.0px;height:18px;line-height:18px;font-size:12px;color:#f1f1f1;">Storage</div>
<svg class="r" style="left:85px;top:492px;" width="7" height="10" viewBox="0 0 7 10"><path d="M1.2 1 L5.8 5 L1.2 9 Z" fill="none" stroke="#f0f0f0" stroke-width="1.3"/></svg>
<svg class="r" style="left:108px;top:491px;" width="15" height="13" viewBox="0 0 15 13"><rect x="0.3" y="0.2" width="14.5" height="12.6" fill="#111"/><rect x="1.3" y="1.3" width="12.5" height="10.5" fill="#dcb67a"/><rect x="6.3" y="1.8" width="6.8" height="1.3" fill="#2a1a08"/></svg>
<div class="t" style="left:127px;top:488.0px;height:18px;line-height:18px;font-size:12px;color:#f1f1f1;">Security</div>
<svg class="r" style="left:49px;top:510px;" width="7" height="10" viewBox="0 0 7 10"><path d="M1.2 1 L5.8 5 L1.2 9 Z" fill="none" stroke="#f0f0f0" stroke-width="1.3"/></svg>
<svg class="r" style="left:72px;top:509px;" width="15" height="13" viewBox="0 0 15 13"><rect x="0.3" y="0.2" width="14.5" height="12.6" fill="#111"/><rect x="1.3" y="1.3" width="12.5" height="10.5" fill="#dcb67a"/><rect x="6.3" y="1.8" width="6.8" height="1.3" fill="#2a1a08"/></svg>
<div class="t" style="left:91px;top:506.0px;height:18px;line-height:18px;font-size:12px;color:#f1f1f1;">Security</div>
<svg class="r" style="left:49px;top:528px;" width="7" height="10" viewBox="0 0 7 10"><path d="M1.2 1 L5.8 5 L1.2 9 Z" fill="none" stroke="#f0f0f0" stroke-width="1.3"/></svg>
<svg class="r" style="left:72px;top:527px;" width="15" height="13" viewBox="0 0 15 13"><rect x="0.3" y="0.2" width="14.5" height="12.6" fill="#111"/><rect x="1.3" y="1.3" width="12.5" height="10.5" fill="#dcb67a"/><rect x="6.3" y="1.8" width="6.8" height="1.3" fill="#2a1a08"/></svg>
<div class="t" style="left:91px;top:524.0px;height:18px;line-height:18px;font-size:12px;color:#f1f1f1;">Server Objects</div>
<svg class="r" style="left:36px;top:545px;" width="15" height="13" viewBox="0 0 15 13"><rect x="0.3" y="0.2" width="14.5" height="12.6" fill="#111"/><rect x="1.3" y="1.3" width="12.5" height="10.5" fill="#dcb67a"/><rect x="6.3" y="1.8" width="6.8" height="1.3" fill="#2a1a08"/></svg>
<div class="t" style="left:55px;top:542.0px;height:18px;line-height:18px;font-size:12px;color:#f1f1f1;">Projects - WebApplication1</div>
<div class="r" style="left:1px;top:905px;width:350px;height:17px;background:#3e3e42;"></div>
<svg class="r" style="left:6px;top:908px;" width="6" height="10" viewBox="0 0 6 10"><path d="M6 0 V10 L0 5 Z" fill="#999"/></svg>
<div class="r" style="left:18px;top:909px;width:199px;height:9px;background:#686868;"></div>
<svg class="r" style="left:339px;top:908px;" width="6" height="10" viewBox="0 0 6 10"><path d="M0 0 V10 L6 5 Z" fill="#999"/></svg>
<div class="r" style="left:0px;top:922px;width:352px;height:21px;background:#2d2d30;"></div>
<div class="t" style="left:6px;top:923.0px;height:18px;line-height:18px;font-size:12px;color:#f1f1f1;letter-spacing:-0.35px">Server Explorer</div>
<div class="r" style="left:90px;top:922px;width:152px;height:21px;background:#1e1e1e;border:1px solid #3f3f46;border-top:none"></div>
<div class="t" style="left:96px;top:923.0px;height:18px;line-height:18px;font-size:12px;color:#3794ff;letter-spacing:-0.2px">SQL Server Object Explorer</div>
<div class="t" style="left:364px;top:98.0px;height:18px;line-height:18px;font-size:12px;color:#f1f1f1;">Index.cshtml</div>
<div class="t" style="left:481px;top:98.0px;height:18px;line-height:18px;font-size:12px;color:#f1f1f1;">HomeController.cs</div>
<div class="t" style="left:630px;top:98.0px;height:18px;line-height:18px;font-size:12px;color:#f1f1f1;">appsettings.Development.json</div>
<div class="t" style="left:839px;top:98.0px;height:18px;line-height:18px;font-size:12px;color:#f1f1f1;">NuGet: WebApplication1</div>
<div class="t" style="left:1019px;top:98.0px;height:18px;line-height:18px;font-size:12px;color:#f1f1f1;">launchSettings.json</div>
<div class="r" style="left:1166px;top:97px;width:99px;height:21px;background:#3e3e40;"></div>
<div class="t" style="left:1170px;top:99.0px;height:18px;line-height:18px;font-size:12px;color:#f1f1f1;">Startup.cs</div>
<svg class="r" style="left:1232px;top:103px;" width="10" height="10" viewBox="0 0 10 10"><path d="M1 5 H5 M5 2 V8 M5 3 H9 V7 H5" stroke="#777" stroke-width="1" fill="none"/></svg>
<svg class="r" style="left:1249px;top:102px;" width="11" height="11" viewBox="0 0 11 11"><path d="M1 1 L10 10 M10 1 L1 10" stroke="#777" stroke-width="1.3"/></svg>
<svg class="r" style="left:1347px;top:102px;" width="12" height="12" viewBox="0 0 12 12"><path d="M1 1.5 H11 M1.5 4.5 H10.5 L6 10 Z" stroke="#d0d0d0" fill="#d0d0d0" stroke-width="1.4"/></svg>
<svg class="r" style="left:1365px;top:101px;" width="14" height="14" viewBox="0 0 14 14"><g fill="#d0d0d0" transform="translate(1 1) scale(.85)"><rect x="5.8" y="0.3" width="2.4" height="13.4" transform="rotate(0 7 7)"/><rect x="5.8" y="0.3" width="2.4" height="13.4" transform="rotate(45 7 7)"/><rect x="5.8" y="0.3" width="2.4" height="13.4" transform="rotate(90 7 7)"/><rect x="5.8" y="0.3" width="2.4" height="13.4" transform="rotate(135 7 7)"/><circle cx="7" cy="7" r="4.6"/><circle cx="7" cy="7" r="1.9" fill="#2d2d30"/></g></svg>
<div class="r" style="left:358px;top:117px;width:1022px;height:628px;background:#1e1e1e;border:1px solid #3f3f46"></div>
<div class="r" style="left:360px;top:118px;width:1019px;height:21px;background:#2d2d30;border-bottom:1px solid #3f3f46"></div>
<div class="r" style="left:359px;top:116px;width:1021px;height:2px;background:#3e3e40;"></div>
<div class="r" style="left:1355px;top:119px;width:22px;height:19px;background:#1e1e1e;"></div>
<svg class="r" style="left:363px;top:122px;" width="16" height="15" viewBox="0 0 16 15"><rect x="0.5" y="0.5" width="14" height="11" fill="none" stroke="#d0d0d0"/><rect x="0.5" y="0.5" width="14" height="2" fill="#d0d0d0"/><circle cx="4.8" cy="9.5" r="5" fill="#2d2d30"/><circle cx="4.8" cy="9.5" r="4.2" fill="none" stroke="#4cb6ea" stroke-width="1.3"/><ellipse cx="4.8" cy="9.5" rx="1.7" ry="4.2" fill="none" stroke="#4cb6ea" stroke-width="1"/><path d="M0.8 8 H8.8 M0.8 11 H8.8" stroke="#4cb6ea" stroke-width="1"/></svg>
<div class="t" style="left:380px;top:120.0px;height:18px;line-height:18px;font-size:12px;color:#f1f1f1;">WebApplication1</div>
<div class="r" style="left:690px;top:119px;width:1px;height:19px;background:#3f3f46;"></div>
<div class="r" style="left:1020px;top:119px;width:1px;height:19px;background:#3f3f46;"></div>
<div class="t" style="left:712px;top:120.0px;height:18px;line-height:18px;font-size:12px;color:#f1f1f1;">WebApplication1.Startup</div>
<div class="t" style="left:1046px;top:120.0px;height:18px;line-height:18px;font-size:12px;color:#f1f1f1;">ConfigureServices(IServiceCollection services)</div>
<div class="r" style="left:1354px;top:119px;width:1px;height:19px;background:#3f3f46;"></div>
<svg class="r" style="left:1361px;top:121px;" width="10" height="8" viewBox="0 0 10 8"><path d="M5 0 V8 M2 3 L5 0 L8 3" stroke="#d0d0d0" fill="none"/></svg>
<div class="r" style="left:359px;top:140px;width:17px;height:587px;background:#333337;"></div>
<div class="r" style="left:360px;top:140px;width:1019px;height:587px;overflow:hidden">
<div class="r" style="left:72px;top:0px;width:5px;height:32px;background:#5b7a34;"></div>
<div class="r" style="left:72px;top:308px;width:5px;height:144px;background:#5b7a34;"></div>
<div class="r" style="left:72px;top:529px;width:5px;height:71px;background:#5b7a34;"></div>
<div class="r" style="left:88px;top:420px;width:1000px;height:17px;background:transparent;border:2px solid #464646"></div>
<div class="r" style="left:93px;top:80px;width:1px;height:520px;background:repeating-linear-gradient(#6e6e6e 0 3px, transparent 3px 5px)"></div>
<div class="r" style="left:121px;top:125px;width:1px;height:475px;background:repeating-linear-gradient(#6e6e6e 0 3px, transparent 3px 5px)"></div>
<div class="r" style="left:149px;top:170px;width:1px;height:20px;background:repeating-linear-gradient(#6e6e6e 0 3px, transparent 3px 5px)"></div>
<div class="r" style="left:149px;top:324px;width:1px;height:128px;background:repeating-linear-gradient(#6e6e6e 0 3px, transparent 3px 5px)"></div>
<div class="r" style="left:149px;top:545px;width:1px;height:55px;background:repeating-linear-gradient(#6e6e6e 0 3px, transparent 3px 5px)"></div>
<div class="r" style="left:177px;top:372px;width:1px;height:16px;background:repeating-linear-gradient(#6e6e6e 0 3px, transparent 3px 5px)"></div>
<div class="r" style="left:84px;top:0px;width:1px;height:32px;background:#a5a5a5;"></div>
<div class="r" style="left:84px;top:31px;width:6px;height:1px;background:#a5a5a5;"></div>
<div class="r" style="left:84px;top:62px;width:1px;height:540px;background:#a5a5a5;"></div>
<div class="r" style="left:84px;top:201px;width:5px;height:1px;background:#a5a5a5;"></div>
<div class="r" style="left:84px;top:403px;width:5px;height:1px;background:#a5a5a5;"></div>
<div class="r" style="left:84px;top:467px;width:5px;height:1px;background:#a5a5a5;"></div>
<div class="r" style="left:79px;top:51px;width:10px;height:10px;border:1px solid #a5a5a5;background:#1e1e1e"></div>
<div class="r" style="left:81px;top:56px;width:6px;height:1px;background:#d0d0d0;"></div>
<div class="r" style="left:79px;top:96px;width:10px;height:10px;border:1px solid #a5a5a5;background:#1e1e1e"></div>
<div class="r" style="left:81px;top:101px;width:6px;height:1px;background:#d0d0d0;"></div>
<div class="r" style="left:79px;top:141px;width:10px;height:10px;border:1px solid #a5a5a5;background:#1e1e1e"></div>
<div class="r" style="left:81px;top:146px;width:6px;height:1px;background:#d0d0d0;"></div>
<div class="r" style="left:79px;top:295px;width:10px;height:10px;border:1px solid #a5a5a5;background:#1e1e1e"></div>
<div class="r" style="left:81px;top:300px;width:6px;height:1px;background:#d0d0d0;"></div>
<div class="r" style="left:79px;top:343px;width:10px;height:10px;border:1px solid #a5a5a5;background:#1e1e1e"></div>
<div class="r" style="left:81px;top:348px;width:6px;height:1px;background:#d0d0d0;"></div>
<div class="r" style="left:79px;top:516px;width:10px;height:10px;border:1px solid #a5a5a5;background:#1e1e1e"></div>
<div class="r" style="left:81px;top:521px;width:6px;height:1px;background:#d0d0d0;"></div>
<div class="m" style="left:16px;top:0.0px;height:16px;line-height:16px;font-size:11.667px;color:#2b91af;width:35px;text-align:right"> 10</div>
<div class="m" style="left:90px;top:0.0px;height:16px;line-height:16px;font-size:11.667px;color:#4a7cab;">using </div>
<div class="m" style="left:132px;top:0.0px;height:16px;line-height:16px;font-size:11.667px;color:#9b9b9b;">System.Threading.Tasks;</div>
<div class="m" style="left:16px;top:16.0px;height:16px;line-height:16px;font-size:11.667px;color:#2b91af;width:35px;text-align:right"> 11</div>
<div class="m" style="left:90px;top:16.0px;height:16px;line-height:16px;font-size:11.667px;color:#569cd6;">using </div>
<div class="m" style="left:132px;top:16.0px;height:16px;line-height:16px;font-size:11.667px;color:#dcdcdc;">Newtonsoft.Json.Serialization;</div>
<div class="m" style="left:16px;top:32.0px;height:16px;line-height:16px;font-size:11.667px;color:#2b91af;width:35px;text-align:right"> 12</div>
<div class="m" style="left:16px;top:48.0px;height:16px;line-height:16px;font-size:11.667px;color:#2b91af;width:35px;text-align:right"> 13</div>
<div class="m" style="left:90px;top:48.0px;height:16px;line-height:16px;font-size:11.667px;color:#569cd6;">namespace </div>
<div class="m" style="left:160px;top:48.0px;height:16px;line-height:16px;font-size:11.667px;color:#dcdcdc;">WebApplication1</div>
<div class="m" style="left:16px;top:64.0px;height:16px;line-height:16px;font-size:11.667px;color:#2b91af;width:35px;text-align:right"> 14</div>
<div class="m" style="left:90px;top:64.0px;height:16px;line-height:16px;font-size:11.667px;color:#dcdcdc;">{</div>
<div class="m" style="left:16px;top:93.0px;height:16px;line-height:16px;font-size:11.667px;color:#2b91af;width:35px;text-align:right"> 15</div>
<div class="m" style="left:90px;top:93.0px;height:16px;line-height:16px;font-size:11.667px;color:#569cd6;">    public class </div>
<div class="m" style="left:209px;top:93.0px;height:16px;line-height:16px;font-size:11.667px;color:#4ec9b0;">Startup</div>
<div class="m" style="left:16px;top:109.0px;height:16px;line-height:16px;font-size:11.667px;color:#2b91af;width:35px;text-align:right"> 16</div>
<div class="m" style="left:90px;top:109.0px;height:16px;line-height:16px;font-size:11.667px;color:#dcdcdc;">    {</div>
<div class="m" style="left:16px;top:138.0px;height:16px;line-height:16px;font-size:11.667px;color:#2b91af;width:35px;text-align:right"> 17</div>
<div class="m" style="left:90px;top:138.0px;height:16px;line-height:16px;font-size:11.667px;color:#569cd6;">        public </div>
<div class="m" style="left:195px;top:138.0px;height:16px;line-height:16px;font-size:11.667px;color:#4ec9b0;">Startup</div>
<div class="m" style="left:244px;top:138.0px;height:16px;line-height:16px;font-size:11.667px;color:#dcdcdc;">(</div>
<div class="m" style="left:251px;top:138.0px;height:16px;line-height:16px;font-size:11.667px;color:#b8d7a3;">IConfiguration</div>
<div class="m" style="left:349px;top:138.0px;height:16px;line-height:16px;font-size:11.667px;color:#dcdcdc;"> configuration)</div>
<div class="m" style="left:16px;top:154.0px;height:16px;line-height:16px;font-size:11.667px;color:#2b91af;width:35px;text-align:right"> 18</div>
<div class="m" style="left:90px;top:154.0px;height:16px;line-height:16px;font-size:11.667px;color:#dcdcdc;">        {</div>
<div class="m" style="left:16px;top:170.0px;height:16px;line-height:16px;font-size:11.667px;color:#2b91af;width:35px;text-align:right"> 19</div>
<div class="m" style="left:90px;top:170.0px;height:16px;line-height:16px;font-size:11.667px;color:#dcdcdc;">            Configuration = configuration;</div>
<div class="m" style="left:16px;top:186.0px;height:16px;line-height:16px;font-size:11.667px;color:#2b91af;width:35px;text-align:right"> 20</div>
<div class="m" style="left:90px;top:186.0px;height:16px;line-height:16px;font-size:11.667px;color:#dcdcdc;">        }</div>
<div class="m" style="left:16px;top:202.0px;height:16px;line-height:16px;font-size:11.667px;color:#2b91af;width:35px;text-align:right"> 21</div>
<div class="m" style="left:16px;top:231.0px;height:16px;line-height:16px;font-size:11.667px;color:#2b91af;width:35px;text-align:right"> 22</div>
<div class="m" style="left:90px;top:231.0px;height:16px;line-height:16px;font-size:11.667px;color:#569cd6;">        public </div>
<div class="m" style="left:195px;top:231.0px;height:16px;line-height:16px;font-size:11.667px;color:#b8d7a3;">IConfiguration</div>
<div class="m" style="left:293px;top:231.0px;height:16px;line-height:16px;font-size:11.667px;color:#dcdcdc;"> Configuration { </div>
<div class="m" style="left:412px;top:231.0px;height:16px;line-height:16px;font-size:11.667px;color:#569cd6;">get</div>
<div class="m" style="left:433px;top:231.0px;height:16px;line-height:16px;font-size:11.667px;color:#dcdcdc;">; }</div>
<div class="m" style="left:16px;top:247.0px;height:16px;line-height:16px;font-size:11.667px;color:#2b91af;width:35px;text-align:right"> 23</div>
<div class="m" style="left:16px;top:263.0px;height:16px;line-height:16px;font-size:11.667px;color:#2b91af;width:35px;text-align:right"> 24</div>
<div class="m" style="left:90px;top:263.0px;height:16px;line-height:16px;font-size:11.667px;color:#57a64a;">        // This method gets called by the runtime.</div>
<div class="m" style="left:16px;top:292.0px;height:16px;line-height:16px;font-size:11.667px;color:#2b91af;width:35px;text-align:right"> 25</div>
<div class="m" style="left:90px;top:292.0px;height:16px;line-height:16px;font-size:11.667px;color:#569cd6;">        public void </div>
<div class="m" style="left:230px;top:292.0px;height:16px;line-height:16px;font-size:11.667px;color:#dcdcaa;">ConfigureServices</div>
<div class="m" style="left:349px;top:292.0px;height:16px;line-height:16px;font-size:11.667px;color:#dcdcdc;">(</div>
<div class="m" style="left:356px;top:292.0px;height:16px;line-height:16px;font-size:11.667px;color:#b8d7a3;">IServiceCollection</div>
<div class="m" style="left:482px;top:292.0px;height:16px;line-height:16px;font-size:11.667px;color:#dcdcdc;"> services)</div>
<div class="m" style="left:16px;top:308.0px;height:16px;line-height:16px;font-size:11.667px;color:#2b91af;width:35px;text-align:right"> 26</div>
<div class="m" style="left:90px;top:308.0px;height:16px;line-height:16px;font-size:11.667px;color:#dcdcdc;">        {</div>
<div class="m" style="left:16px;top:324.0px;height:16px;line-height:16px;font-size:11.667px;color:#2b91af;width:35px;text-align:right"> 27</div>
<div class="m" style="left:90px;top:324.0px;height:16px;line-height:16px;font-size:11.667px;color:#57a64a;">            // Enable CORS</div>
<div class="m" style="left:16px;top:340.0px;height:16px;line-height:16px;font-size:11.667px;color:#2b91af;width:35px;text-align:right"> 28</div>
<div class="m" style="left:90px;top:340.0px;height:16px;line-height:16px;font-size:11.667px;color:#dcdcdc;">            </div>
<div class="m" style="left:174px;top:340.0px;height:16px;line-height:16px;font-size:11.667px;color:#9cdcfe;">services</div>
<div class="m" style="left:230px;top:340.0px;height:16px;line-height:16px;font-size:11.667px;color:#dcdcdc;">.</div>
<div class="m" style="left:237px;top:340.0px;height:16px;line-height:16px;font-size:11.667px;color:#dcdcaa;">AddCors</div>
<div class="m" style="left:286px;top:340.0px;height:16px;line-height:16px;font-size:11.667px;color:#dcdcdc;">(c =></div>
<div class="m" style="left:16px;top:356.0px;height:16px;line-height:16px;font-size:11.667px;color:#2b91af;width:35px;text-align:right"> 29</div>
<div class="m" style="left:90px;top:356.0px;height:16px;line-height:16px;font-size:11.667px;color:#dcdcdc;">            {</div>
<div class="m" style="left:16px;top:372.0px;height:16px;line-height:16px;font-size:11.667px;color:#2b91af;width:35px;text-align:right"> 30</div>
<div class="m" style="left:90px;top:372.0px;height:16px;line-height:16px;font-size:11.667px;color:#dcdcdc;">                </div>
<div class="m" style="left:202px;top:372.0px;height:16px;line-height:16px;font-size:11.667px;color:#9cdcfe;">x</div>
<div class="m" style="left:209px;top:372.0px;height:16px;line-height:16px;font-size:11.667px;color:#dcdcdc;">.</div>
<div class="m" style="left:216px;top:372.0px;height:16px;line-height:16px;font-size:11.667px;color:#dcdcaa;">AddPolicy</div>
<div class="m" style="left:279px;top:372.0px;height:16px;line-height:16px;font-size:11.667px;color:#dcdcdc;">(</div>
<div class="m" style="left:16px;top:388.0px;height:16px;line-height:16px;font-size:11.667px;color:#2b91af;width:35px;text-align:right"> 31</div>
<div class="m" style="left:90px;top:388.0px;height:16px;line-height:16px;font-size:11.667px;color:#dcdcdc;">            });</div>
<div class="m" style="left:16px;top:404.0px;height:16px;line-height:16px;font-size:11.667px;color:#2b91af;width:35px;text-align:right"> 32</div>
<div class="m" style="left:90px;top:404.0px;height:16px;line-height:16px;font-size:11.667px;color:#dcdcdc;">            </div>
<div class="m" style="left:174px;top:404.0px;height:16px;line-height:16px;font-size:11.667px;color:#9cdcfe;">services</div>
<div class="m" style="left:230px;top:404.0px;height:16px;line-height:16px;font-size:11.667px;color:#dcdcdc;">.</div>
<div class="m" style="left:237px;top:404.0px;height:16px;line-height:16px;font-size:11.667px;color:#dcdcaa;">AddControllersWithViews</div>
<div class="m" style="left:398px;top:404.0px;height:16px;line-height:16px;font-size:11.667px;color:#dcdcdc;">();</div>
<div class="m" style="left:16px;top:420.0px;height:16px;line-height:16px;font-size:11.667px;color:#2b91af;width:35px;text-align:right"> 33</div>
<div class="m" style="left:90px;top:420.0px;height:16px;line-height:16px;font-size:11.667px;color:#57a64a;">            // JSON serializer</div>
<div class="m" style="left:16px;top:436.0px;height:16px;line-height:16px;font-size:11.667px;color:#2b91af;width:35px;text-align:right"> 34</div>
<div class="m" style="left:90px;top:436.0px;height:16px;line-height:16px;font-size:11.667px;color:#dcdcdc;">            </div>
<div class="m" style="left:174px;top:436.0px;height:16px;line-height:16px;font-size:11.667px;color:#9cdcfe;">services</div>
<div class="m" style="left:230px;top:436.0px;height:16px;line-height:16px;font-size:11.667px;color:#dcdcdc;">.</div>
<div class="m" style="left:237px;top:436.0px;height:16px;line-height:16px;font-size:11.667px;color:#dcdcaa;">AddControllersWithViews</div>
<div class="m" style="left:398px;top:436.0px;height:16px;line-height:16px;font-size:11.667px;color:#dcdcdc;">()</div>
<div class="m" style="left:16px;top:452.0px;height:16px;line-height:16px;font-size:11.667px;color:#2b91af;width:35px;text-align:right"> 35</div>
<div class="m" style="left:90px;top:452.0px;height:16px;line-height:16px;font-size:11.667px;color:#dcdcdc;">        }</div>
<div class="m" style="left:16px;top:468.0px;height:16px;line-height:16px;font-size:11.667px;color:#2b91af;width:35px;text-align:right"> 36</div>
<div class="m" style="left:16px;top:484.0px;height:16px;line-height:16px;font-size:11.667px;color:#2b91af;width:35px;text-align:right"> 37</div>
<div class="m" style="left:90px;top:484.0px;height:16px;line-height:16px;font-size:11.667px;color:#57a64a;">        // This method gets called by the runtime.</div>
<div class="m" style="left:16px;top:513.0px;height:16px;line-height:16px;font-size:11.667px;color:#2b91af;width:35px;text-align:right"> 38</div>
<div class="m" style="left:90px;top:513.0px;height:16px;line-height:16px;font-size:11.667px;color:#569cd6;">        public void </div>
<div class="m" style="left:230px;top:513.0px;height:16px;line-height:16px;font-size:11.667px;color:#dcdcaa;">Configure</div>
<div class="m" style="left:293px;top:513.0px;height:16px;line-height:16px;font-size:11.667px;color:#dcdcdc;">(</div>
<div class="m" style="left:300px;top:513.0px;height:16px;line-height:16px;font-size:11.667px;color:#b8d7a3;">IApplicationBuilder</div>
<div class="m" style="left:433px;top:513.0px;height:16px;line-height:16px;font-size:11.667px;color:#dcdcdc;"> app)</div>
<div class="m" style="left:16px;top:529.0px;height:16px;line-height:16px;font-size:11.667px;color:#2b91af;width:35px;text-align:right"> 39</div>
<div class="m" style="left:90px;top:529.0px;height:16px;line-height:16px;font-size:11.667px;color:#dcdcdc;">        {</div>
<div class="m" style="left:16px;top:545.0px;height:16px;line-height:16px;font-size:11.667px;color:#2b91af;width:35px;text-align:right"> 40</div>
<div class="m" style="left:90px;top:545.0px;height:16px;line-height:16px;font-size:11.667px;color:#57a64a;">            // Enable CORS</div>
<div class="m" style="left:16px;top:561.0px;height:16px;line-height:16px;font-size:11.667px;color:#2b91af;width:35px;text-align:right"> 41</div>
<div class="m" style="left:90px;top:561.0px;height:16px;line-height:16px;font-size:11.667px;color:#dcdcdc;">            </div>
<div class="m" style="left:174px;top:561.0px;height:16px;line-height:16px;font-size:11.667px;color:#9cdcfe;">app</div>
<div class="m" style="left:195px;top:561.0px;height:16px;line-height:16px;font-size:11.667px;color:#dcdcdc;">.</div>
<div class="m" style="left:202px;top:561.0px;height:16px;line-height:16px;font-size:11.667px;color:#dcdcaa;">UseCors</div>
<div class="m" style="left:251px;top:561.0px;height:16px;line-height:16px;font-size:11.667px;color:#dcdcdc;">(x => x</div>
<div class="m" style="left:16px;top:577.0px;height:16px;line-height:16px;font-size:11.667px;color:#2b91af;width:35px;text-align:right"> 42</div>
<div class="t" style="left:118px;top:79.5px;height:13px;line-height:13px;font-size:10.5px;color:#999999;">2 references</div>
<div class="t" style="left:146px;top:124.5px;height:13px;line-height:13px;font-size:10.5px;color:#999999;">0 references</div>
<div class="t" style="left:146px;top:217.5px;height:13px;line-height:13px;font-size:10.5px;color:#999999;">1 reference</div>
<div class="t" style="left:146px;top:278.5px;height:13px;line-height:13px;font-size:10.5px;color:#999999;">0 references</div>
<div class="t" style="left:146px;top:499.5px;height:13px;line-height:13px;font-size:10.5px;color:#999999;">0 references</div>
<svg class="r" style="left:52px;top:420px;" width="17" height="17" viewBox="0 0 17 17"><path d="M2.5 14.5 L8.5 8.5" stroke="#e8e8e8" stroke-width="5.2" stroke-linecap="round"/><path d="M2.5 14.5 L8.5 8.5" stroke="#2f6db5" stroke-width="3.4" stroke-linecap="round"/><path d="M8.5 8.5 L13 4" stroke="#d8d8d8" stroke-width="1.6"/><circle cx="13.5" cy="3.5" r="2.3" fill="none" stroke="#d8d8d8" stroke-width="1.3"/></svg>
</div>
<div class="r" style="left:360px;top:727px;width:1019px;height:18px;background:#3e3e42;"></div>
<div class="r" style="left:360px;top:728px;width:58px;height:16px;background:#333337;"></div>
<div class="t" style="left:362px;top:727.2px;height:17.5px;line-height:17.5px;font-size:11.5px;color:#f1f1f1;">100 %</div>
<svg class="r" style="left:407px;top:735px;" width="7" height="4" viewBox="0 0 7 4"><path d="M0 0 H7 L3.5 4 Z" fill="#f1f1f1"/></svg>
<svg class="r" style="left:442px;top:729px;" width="13" height="13" viewBox="0 0 13 13"><circle cx="6.5" cy="6.5" r="6" fill="#fff"/><circle cx="6.5" cy="6.5" r="5" fill="#388a34"/><path d="M3.5 6.5 L5.7 8.7 L9.5 4.5" stroke="#fff" stroke-width="1.6" fill="none"/></svg>
<div class="t" style="left:459px;top:727.0px;height:18px;line-height:18px;font-size:12px;color:#f1f1f1;">No issues found</div>
<div class="r" style="left:358px;top:751px;width:1023px;height:172px;background:#2a2a2d;border:1px solid #3f3f46"></div>
<div class="r" style="left:359px;top:752px;width:1021px;height:22px;background:#2d2d30;"></div>
<div class="t" style="left:364px;top:753.5px;height:18px;line-height:18px;font-size:12px;color:#f1f1f1;">Autos</div>
<svg class="r" style="left:406px;top:760px;" width="970" height="5" viewBox="0 0 970 5"><defs><pattern id="g7" width="4" height="4" patternUnits="userSpaceOnUse"><rect x="0" y="0" width="1" height="1" fill="#505054"/><rect x="2" y="2" width="1" height="1" fill="#505054"/></pattern></defs><rect width="970" height="5" fill="url(#g7)"/></svg>
<div class="r" style="left:359px;top:775px;width:225px;height:21px;background:#333337;border:1px solid #3f3f46"></div>
<div class="t" style="left:363px;top:776.5px;height:18px;line-height:18px;font-size:12px;color:#999999;">Search (Ctrl+E)</div>
<svg class="r" style="left:556px;top:778px;" width="14" height="14" viewBox="0 0 14 14"><circle cx="9" cy="5" r="3.8" fill="none" stroke="#f1f1f1" stroke-width="1.8"/><path d="M6.3 7.7 L1.5 12.5" stroke="#f1f1f1" stroke-width="2.2"/></svg>
<div class="r" style="left:571px;top:776px;width:13px;height:19px;background:#3f3f46;"></div>
<svg class="r" style="left:574px;top:784px;" width="7" height="4" viewBox="0 0 7 4"><path d="M0 0 H7 L3.5 4 Z" fill="#f1f1f1"/></svg>
<svg class="r" style="left:592px;top:778px;" width="12" height="14" viewBox="0 0 12 14"><path d="M11 7 H2 M6 2 L1 7 L6 12" stroke="#555" stroke-width="1.8" fill="none"/></svg>
<div class="r" style="left:359px;top:796px;width:1021px;height:22px;background:#252526;border-bottom:1px solid #2d2d30"></div>
<div class="r" style="left:367px;top:797px;width:1px;height:20px;background:#2d2d30;"></div>
<div class="t" style="left:373px;top:799.0px;height:18px;line-height:18px;font-size:12px;color:#999999;">Name</div>
<div class="r" style="left:578px;top:797px;width:1px;height:20px;background:#2d2d30;"></div>
<div class="t" style="left:584px;top:799.0px;height:18px;line-height:18px;font-size:12px;color:#999999;">Value</div>
<div class="r" style="left:1000px;top:797px;width:1px;height:20px;background:#2d2d30;"></div>
<div class="t" style="left:1006px;top:799.0px;height:18px;line-height:18px;font-size:12px;color:#999999;">Type</div>
<div class="r" style="left:359px;top:922px;width:42px;height:21px;background:#1e1e1e;border:1px solid #3f3f46;border-top:none"></div>
<div class="t" style="left:363px;top:923.0px;height:18px;line-height:18px;font-size:12px;color:#3794ff;">Autos</div>
<div class="t" style="left:407px;top:923.0px;height:18px;line-height:18px;font-size:12px;color:#f1f1f1;">Locals</div>
<div class="t" style="left:452px;top:923.0px;height:18px;line-height:18px;font-size:12px;color:#f1f1f1;">Watch 1</div>
<div class="r" style="left:1384px;top:97px;width:307px;height:648px;background:#252526;border:1px solid #3f3f46"></div>
<div class="r" style="left:1385px;top:98px;width:305px;height:21px;background:#2d2d30;"></div>
<div class="t" style="left:1389px;top:99.5px;height:18px;line-height:18px;font-size:12px;color:#f1f1f1;">Diagnostic Tools</div>
<svg class="r" style="left:1485px;top:106px;" width="130" height="5" viewBox="0 0 130 5"><defs><pattern id="g8" width="4" height="4" patternUnits="userSpaceOnUse"><rect x="0" y="0" width="1" height="1" fill="#46464a"/><rect x="2" y="2" width="1" height="1" fill="#46464a"/></pattern></defs><rect width="130" height="5" fill="url(#g8)"/></svg>
<svg class="r" style="left:1641px;top:106px;" width="9" height="5" viewBox="0 0 9 5"><path d="M0 0 H9 L4.5 5 Z" fill="#f1f1f1"/></svg>
<svg class="r" style="left:1657px;top:102px;" width="9" height="13" viewBox="0 0 9 13"><path d="M2 1 H7 M3 1 V7 M6 1 V7 M1 7 H8 M4.5 7 V12" stroke="#f1f1f1" stroke-width="1.3" fill="none"/></svg>
<svg class="r" style="left:1674px;top:103px;" width="10" height="10" viewBox="0 0 10 10"><path d="M1 1 L9 9 M9 1 L1 9" stroke="#f1f1f1" stroke-width="1.6"/></svg>
<div class="r" style="left:1385px;top:119px;width:305px;height:27px;background:#2d2d30;"></div>
<div class="r" style="left:1400px;top:124px;width:12px;height:10px;background:transparent;border:1px solid #999"></div>
<div class="r" style="left:1430px;top:124px;width:12px;height:10px;background:transparent;border:1px solid #999"></div>
<svg class="r" style="left:1464px;top:124px;" width="16" height="16" viewBox="0 0 16 16"><circle cx="6" cy="6" r="4.8" fill="#e8e8e8" stroke="#c8c8c8" stroke-width="1.5"/><path d="M9.5 9.5 L14.5 14.5" stroke="#c8c8c8" stroke-width="3"/><path d="M3.5 6 H8.5 M6 3.5 V8.5" stroke="#1f5fa8" stroke-width="1.4"/></svg>
<svg class="r" style="left:1489px;top:124px;" width="16" height="16" viewBox="0 0 16 16"><circle cx="6" cy="6" r="4.8" fill="#e8e8e8" stroke="#c8c8c8" stroke-width="1.5"/><path d="M9.5 9.5 L14.5 14.5" stroke="#c8c8c8" stroke-width="3"/><path d="M3.5 6 H8.5" stroke="#1f5fa8" stroke-width="1.4"/></svg>
<svg class="r" style="left:1514px;top:123px;" width="15" height="17" viewBox="0 0 15 17"><path d="M2 3 C2 0 6 0 6 3 C6 5 4 5 4 7" stroke="#ddd" stroke-width="1.3" fill="none"/><rect x="3" y="9" width="2" height="8" fill="#ddd"/><rect x="6" y="6" width="2" height="11" fill="#ddd"/><rect x="9" y="11" width="2" height="6" fill="#ddd"/><rect x="12" y="8" width="2" height="9" fill="#ddd"/></svg>
<div class="r" style="left:1385px;top:146px;width:305px;height:21px;background:#252526;"></div>
<div class="t" style="left:1200px;top:147.5px;height:18px;line-height:18px;font-size:12px;color:#f1f1f1;font-weight:bold;letter-spacing:-0.3px;width:374px;text-align:right">Diagnostics session: 1:53 minutes</div>
<div class="r" style="left:1385px;top:167px;width:305px;height:24px;background:#252526;border-top:1px solid #3f3f46;border-bottom:1px solid #3f3f46"></div>
<div class="t" style="left:1456px;top:168.0px;height:18px;line-height:18px;font-size:12px;color:#f1f1f1;">1:40min</div>
<div class="t" style="left:1582px;top:168.0px;height:18px;line-height:18px;font-size:12px;color:#f1f1f1;">1:50min</div>
<div class="r" style="left:1579px;top:168px;width:1px;height:22px;background:#3f3f46;"></div>
<div class="r" style="left:1477px;top:185px;width:1px;height:5px;background:#5a5a5a;"></div>
<div class="r" style="left:1502px;top:185px;width:1px;height:5px;background:#5a5a5a;"></div>
<div class="r" style="left:1528px;top:185px;width:1px;height:5px;background:#5a5a5a;"></div>
<div class="r" style="left:1553px;top:185px;width:1px;height:5px;background:#5a5a5a;"></div>
<div class="r" style="left:1603px;top:185px;width:1px;height:5px;background:#5a5a5a;"></div>
<div class="r" style="left:1629px;top:185px;width:1px;height:5px;background:#5a5a5a;"></div>
<div class="r" style="left:1653px;top:168px;width:4px;height:21px;background:#e8e8e8;"></div>
<div class="r" style="left:1390px;top:211px;width:264px;height:47px;background:transparent;border:1px solid #505050"></div>
<div class="r" style="left:1391px;top:235px;width:262px;height:1px;background:#c0c0c0;"></div>
<div class="r" style="left:1579px;top:212px;width:1px;height:23px;background:#3f3f46;"></div>
<div class="r" style="left:1579px;top:236px;width:1px;height:21px;background:#3f3f46;"></div>
<div class="t" style="left:1398px;top:262.0px;height:18px;line-height:18px;font-size:12px;color:#f1f1f1;font-weight:bold">Process Memory (MB)</div>
<svg class="r" style="left:1544px;top:264px;" width="4" height="11" viewBox="0 0 4 11"><path d="M1.2 0 L2.4 10" stroke="#f0c000" stroke-width="1.6"/></svg>
<svg class="r" style="left:1556px;top:262px;" width="11" height="10" viewBox="0 0 11 10"><path d="M0 0 H11 L5.5 10 Z" fill="#3b9cf0"/></svg>
<div class="t" style="left:1571px;top:262.5px;height:17px;line-height:17px;font-size:11px;color:#f1f1f1;width:5px;overflow:hidden">S</div>
<div class="r" style="left:1586px;top:264px;width:12px;height:12px;border-radius:6px;background:#75aac4"></div>
<div class="t" style="left:1600px;top:262.0px;height:18px;line-height:18px;font-size:12px;color:#f1f1f1;font-weight:bold">Pr..</div>
<div class="r" style="left:1390px;top:282px;width:264px;height:70px;background:#252526;border:1px solid #505050"></div>
<div class="r" style="left:1391px;top:289px;width:232px;height:62px;background:#5a7d8e;"></div>
<div class="r" style="left:1579px;top:283px;width:1px;height:68px;background:#3f3f46;opacity:.2"></div>
<div class="t" style="left:1659px;top:282.0px;height:18px;line-height:18px;font-size:12px;color:#f1f1f1;">95</div>
<div class="t" style="left:1659px;top:336.0px;height:18px;line-height:18px;font-size:12px;color:#f1f1f1;">0</div>
<div class="t" style="left:1398px;top:354.0px;height:18px;line-height:18px;font-size:12px;color:#f1f1f1;font-weight:bold">CPU (% of all processors)</div>
<div class="r" style="left:1390px;top:372px;width:264px;height:70px;background:#252526;border:1px solid #505050"></div>
<div class="r" style="left:1579px;top:373px;width:1px;height:68px;background:#3f3f46;"></div>
<div class="r" style="left:1391px;top:439px;width:232px;height:2px;background:#5a7d8e;"></div>
<div class="t" style="left:1659px;top:372.0px;height:18px;line-height:18px;font-size:12px;color:#f1f1f1;">100</div>
<div class="t" style="left:1659px;top:425.0px;height:18px;line-height:18px;font-size:12px;color:#f1f1f1;">0</div>
<div class="r" style="left:1385px;top:461px;width:305px;height:4px;background:#3f3f46;"></div>
<div class="r" style="left:1385px;top:465px;width:305px;height:22px;background:#2d2d30;"></div>
<div class="t" style="left:1200px;top:469.0px;height:18px;line-height:18px;font-size:12px;color:#f1f1f1;width:292px;text-align:right">Summary   Events</div>
<div class="t" style="left:1504px;top:469.0px;height:18px;line-height:18px;font-size:12px;color:#f1f1f1;">Memory Usage</div>
<div class="t" style="left:1596px;top:469.0px;height:18px;line-height:18px;font-size:12px;color:#f1f1f1;">CPU Usage</div>
<div class="r" style="left:1385px;top:487px;width:305px;height:2px;background:#3f3f46;"></div>
<div class="r" style="left:1385px;top:489px;width:305px;height:22px;background:#252526;border-bottom:1px solid #3f3f46"></div>
<div class="r" style="left:1385px;top:511px;width:305px;height:58px;background:#252526;border-bottom:1px solid #3f3f46"></div>
<div class="r" style="left:1385px;top:569px;width:305px;height:22px;background:#252526;border-bottom:1px solid #3f3f46"></div>
<div class="r" style="left:1385px;top:591px;width:305px;height:30px;background:#252526;border-bottom:1px solid #3f3f46"></div>
<div class="r" style="left:1385px;top:621px;width:305px;height:23px;background:#252526;border-bottom:1px solid #3f3f46"></div>
<div class="r" style="left:1385px;top:644px;width:305px;height:100px;background:#252526;border-bottom:1px solid #3f3f46"></div>
<div class="t" style="left:1200px;top:518.0px;height:18px;line-height:18px;font-size:12px;color:#f1f1f1;width:328px;text-align:right">Events (0 of 0)</div>
<div class="t" style="left:1200px;top:546.0px;height:18px;line-height:18px;font-size:12px;color:#f1f1f1;width:403px;text-align:right">Application Insights Events (0 of 0)</div>
<div class="t" style="left:1200px;top:572.0px;height:18px;line-height:18px;font-size:12px;color:#f1f1f1;width:276px;text-align:right">Memory Usage</div>
<div class="t" style="left:1200px;top:598.0px;height:18px;line-height:18px;font-size:12px;color:#f1f1f1;width:298px;text-align:right">Take Snapshot</div>
<div class="t" style="left:1200px;top:650.0px;height:18px;line-height:18px;font-size:12px;color:#f1f1f1;width:321px;text-align:right">Record CPU Profile</div>
<div class="r" style="left:1384px;top:751px;width:306px;height:172px;background:#2a2a2d;border:1px solid #3f3f46"></div>
<div class="r" style="left:1385px;top:752px;width:304px;height:22px;background:#2d2d30;"></div>
<div class="t" style="left:1389px;top:753.5px;height:18px;line-height:18px;font-size:12px;color:#f1f1f1;">Call Stack</div>
<svg class="r" style="left:1440px;top:760px;" width="190" height="5" viewBox="0 0 190 5"><defs><pattern id="g9" width="4" height="4" patternUnits="userSpaceOnUse"><rect x="0" y="0" width="1" height="1" fill="#46464a"/><rect x="2" y="2" width="1" height="1" fill="#46464a"/></pattern></defs><rect width="190" height="5" fill="url(#g9)"/></svg>
<svg class="r" style="left:1640px;top:760px;" width="9" height="5" viewBox="0 0 9 5"><path d="M0 0 H9 L4.5 5 Z" fill="#f1f1f1"/></svg>
<svg class="r" style="left:1657px;top:755px;" width="9" height="13" viewBox="0 0 9 13"><path d="M2 1 H7 M3 1 V7 M6 1 V7 M1 7 H8 M4.5 7 V12" stroke="#f1f1f1" stroke-width="1.3" fill="none"/></svg>
<svg class="r" style="left:1673px;top:757px;" width="10" height="10" viewBox="0 0 10 10"><path d="M1 1 L9 9 M9 1 L1 9" stroke="#f1f1f1" stroke-width="1.6"/></svg>
<div class="r" style="left:1385px;top:774px;width:292px;height:20px;background:#252526;border-bottom:1px solid #2d2d30"></div>
<div class="r" style="left:1642px;top:775px;width:1px;height:18px;background:#2d2d30;"></div>
<div class="t" style="left:1648px;top:774.0px;height:18px;line-height:18px;font-size:12px;color:#777777;width:24px;overflow:hidden">Language</div>
<div class="r" style="left:1672px;top:774px;width:17px;height:149px;background:#3e3e42;"></div>
<svg class="r" style="left:1675px;top:780px;" width="11" height="6" viewBox="0 0 11 6"><path d="M0 6 L5.5 0 L11 6 Z" fill="#555"/></svg>
<svg class="r" style="left:1675px;top:911px;" width="11" height="6" viewBox="0 0 11 6"><path d="M0 0 L5.5 6 L11 0 Z" fill="#555"/></svg>
<div class="r" style="left:1384px;top:922px;width:306px;height:21px;background:#2d2d30;"></div>
<div class="t" style="left:1200px;top:923.0px;height:18px;line-height:18px;font-size:12px;color:#f1f1f1;width:296px;text-align:right">Immediate Window</div>
<div class="t" style="left:1508px;top:923.0px;height:18px;line-height:18px;font-size:12px;color:#f1f1f1;">Output</div>
<div class="r" style="left:1691px;top:97px;width:33px;height:852px;background:#2d2d30;"></div>
<div class="t" style="left:1696px;top:133.0px;height:18px;line-height:18px;font-size:12px;color:#f1f1f1;transform:rotate(90deg);transform-origin:0 0;left:1714px;top:97px">Solution Explorer</div>
<div class="t" style="left:1696px;top:221.0px;height:18px;line-height:18px;font-size:12px;color:#f1f1f1;transform:rotate(90deg);transform-origin:0 0;left:1714px;top:199px">Git Changes</div>
<div class="r" style="left:1716px;top:98px;width:6px;height:88px;background:#3e3e42;"></div>
<div class="r" style="left:1716px;top:198px;width:6px;height:64px;background:#3e3e42;"></div>
<div class="r" style="left:1722px;top:97px;width:2px;height:638px;background:#1e1e1e;"></div>
<div class="r" style="left:0px;top:949px;width:1724px;height:23px;background:#ca5100;"></div>
<svg class="r" style="left:-1px;top:953px;" width="16" height="14" viewBox="0 0 16 14"><path d="M4 1 H15 L12 13 H1 Z" fill="none" stroke="#fff" stroke-width="1.3"/></svg>
<div class="t" style="left:22px;top:952.0px;height:18px;line-height:18px;font-size:12px;color:#ffffff;">Ready</div>
<svg class="r" style="left:1493px;top:953px;" width="12" height="14" viewBox="0 0 12 14"><path d="M6 14 V2 M1.5 6.5 L6 2 L10.5 6.5" stroke="#fff" stroke-width="2" fill="none"/></svg>
<div class="t" style="left:1513px;top:952.0px;height:18px;line-height:18px;font-size:12px;color:#ffffff;">Add to Source Control</div>
<svg class="r" style="left:1636px;top:957px;" width="9" height="5" viewBox="0 0 9 5"><path d="M0 5 H9 L4.5 0 Z" fill="#fff"/></svg>
<svg class="r" style="left:1664px;top:951px;" width="20" height="20" viewBox="0 0 20 20"><path d="M4 13 C4 6 5 3 9 3 C13 3 14 6 14 13 L15 14 H3 Z" fill="#bbb"/><circle cx="14" cy="14" r="5.5" fill="#fff"/></svg>
<div class="t" style="left:1670px;top:956.0px;height:16px;line-height:16px;font-size:10px;color:#000000;width:16px;text-align:center;font-weight:bold;left:1672px">3</div>
<svg class="r" style="left:1712px;top:960px;" width="10" height="10" viewBox="0 0 10 10"><rect x="8" y="8" width="1" height="1" fill="#ddd"/><rect x="6" y="6" width="1" height="1" fill="#ddd"/><rect x="8" y="6" width="1" height="1" fill="#ddd"/><rect x="4" y="4" width="1" height="1" fill="#ddd"/><rect x="6" y="4" width="1" height="1" fill="#ddd"/><rect x="8" y="4" width="1" height="1" fill="#ddd"/><rect x="2" y="2" width="1" height="1" fill="#ddd"/><rect x="4" y="2" width="1" height="1" fill="#ddd"/><rect x="6" y="2" width="1" height="1" fill="#ddd"/><rect x="8" y="2" width="1" height="1" fill="#ddd"/><rect x="0" y="0" width="1" height="1" fill="#ddd"/><rect x="2" y="0" width="1" height="1" fill="#ddd"/><rect x="4" y="0" width="1" height="1" fill="#ddd"/><rect x="6" y="0" width="1" height="1" fill="#ddd"/><rect x="8" y="0" width="1" height="1" fill="#ddd"/></svg>
<div class="r" style="left:601px;top:126px;width:864px;height:860px;box-shadow:0 0 6px 1px rgba(0,0,0,.35)"></div>
<div class="r" style="left:601px;top:126px;width:864px;height:846px;background:#0d0e16;"></div>
<div class="r" style="left:601px;top:126px;width:1px;height:846px;background:#e0203a;"></div>
<div class="r" style="left:1464px;top:126px;width:1px;height:846px;background:#e0203a;"></div>
<svg class="r" style="left:614px;top:141px;" width="16" height="16" viewBox="0 0 16 16"><circle cx="8" cy="8" r="8" fill="#ff0000"/><circle cx="8" cy="8" r="4.6" fill="none" stroke="#fff" stroke-width="1.2"/><path d="M6.5 5.7 L10.5 8 L6.5 10.3 Z" fill="#fff"/></svg>
<svg class="r" style="left:637px;top:143px;" width="14" height="12" viewBox="0 0 14 12"><path d="M1 4 H4 L8 1 V11 L4 8 H1 Z" fill="#fff"/><path d="M10 4 C11 5 11 7 10 8 M12 2.5 C13.8 4.5 13.8 7.5 12 9.5" stroke="#fff" stroke-width="1.2" fill="none"/></svg>
<div class="t" style="left:654px;top:141.2px;height:18.5px;line-height:18.5px;font-size:12.5px;color:#d8d8dc;letter-spacing:-0.2px;width:92px;overflow:hidden;-webkit-mask-image:linear-gradient(90deg,#000 80%,transparent)">Belly of the Beast</div>
<div class="r" style="left:754px;top:141px;width:1px;height:18px;background:#3a3c48;"></div>
<svg class="r" style="left:761px;top:141px;" width="17" height="17" viewBox="0 0 17 17"><circle cx="8.5" cy="8.5" r="8.5" fill="#ef5b25"/><path d="M10 3.5 L5 9 L10 13.5 L13.5 9.5 Z" fill="none" stroke="#fff" stroke-width="1.3"/><path d="M10 7 L11.5 9 L10 11" stroke="#fff" stroke-width="1"/></svg>
<div class="t" style="left:786px;top:141.2px;height:18.5px;line-height:18.5px;font-size:12.5px;color:#d8d8dc;letter-spacing:-0.2px;width:108px;overflow:hidden;-webkit-mask-image:linear-gradient(90deg,#000 85%,transparent)">Download Postman |</div>
<div class="r" style="left:902px;top:141px;width:1px;height:18px;background:#3a3c48;"></div>
<svg class="r" style="left:910px;top:141px;" width="16" height="16" viewBox="0 0 16 16"><rect x="0" y="0" width="7.5" height="7.5" fill="#f25022"/><rect x="8.5" y="0" width="7.5" height="7.5" fill="#7fba00"/><rect x="0" y="8.5" width="7.5" height="7.5" fill="#00a4ef"/><rect x="8.5" y="8.5" width="7.5" height="7.5" fill="#ffb900"/></svg>
<div class="t" style="left:934px;top:141.2px;height:18.5px;line-height:18.5px;font-size:12.5px;color:#d8d8dc;letter-spacing:-0.2px;width:110px;overflow:hidden;-webkit-mask-image:linear-gradient(90deg,#000 85%,transparent)">ASP.NET documentation</div>
<div class="r" style="left:1049px;top:135px;width:148px;height:31px;background:#30333e;border-radius:6px 6px 0 0"></div>
<svg class="r" style="left:1057px;top:141px;" width="17" height="17" viewBox="0 0 17 17"><rect x="1" y="1" width="9" height="14" fill="#9fb8d8"/><rect x="5" y="3" width="10" height="13" fill="#e6e9ee"/><path d="M7 7 H13 M7 9.5 H13 M7 12 H13" stroke="#9aa4b0" stroke-width="1"/><rect x="1" y="1" width="3" height="14" fill="#5b87c0"/></svg>
<div class="t" style="left:1081px;top:141.2px;height:18.5px;line-height:18.5px;font-size:12.5px;color:#ffffff;font-weight:bold;letter-spacing:-0.4px;width:92px;overflow:hidden;-webkit-mask-image:linear-gradient(90deg,#000 80%,transparent)">Home Page - WebApplication1</div>
<svg class="r" style="left:1180px;top:144px;" width="11" height="11" viewBox="0 0 11 11"><path d="M1 1 L10 10 M10 1 L1 10" stroke="#fff" stroke-width="1.8"/></svg>
<svg class="r" style="left:1211px;top:143px;" width="14" height="14" viewBox="0 0 14 14"><path d="M7 0 V14 M0 7 H14" stroke="#fff" stroke-width="2"/></svg>
<svg class="r" style="left:1297px;top:137px;" width="12" height="7" viewBox="0 0 12 7"><path d="M0.5 0.5 L6 6 L11.5 0.5" stroke="#e8e8e8" stroke-width="1.1" fill="none"/></svg>
<div class="r" style="left:1343px;top:141px;width:11px;height:1px;background:#f0f0f0;"></div>
<div class="r" style="left:1390px;top:136px;width:11px;height:11px;background:transparent;border:1.2px solid #f0f0f0"></div>
<svg class="r" style="left:1435px;top:135px;" width="12" height="12" viewBox="0 0 12 12"><path d="M0.5 0.5 L11.5 11.5 M11.5 0.5 L0.5 11.5" stroke="#f0f0f0" stroke-width="1.3"/></svg>
<div class="r" style="left:602px;top:165px;width:862px;height:36px;background:#30333e;"></div>
<svg class="r" style="left:615px;top:174px;" width="16" height="17" viewBox="0 0 16 17"><path d="M13 2 L2 8.5 L13 15 Z" fill="none" stroke="#e8e8e8" stroke-width="1.6" stroke-linejoin="round"/></svg>
<svg class="r" style="left:648px;top:174px;" width="16" height="17" viewBox="0 0 16 17"><path d="M3 2 L14 8.5 L3 15 Z" fill="none" stroke="#6c6f7a" stroke-width="1.6" stroke-linejoin="round"/></svg>
<svg class="r" style="left:679px;top:174px;" width="18" height="18" viewBox="0 0 18 18"><path d="M14.5 10 A6 6 0 1 1 12.5 4.5" stroke="#e8e8e8" stroke-width="1.8" fill="none"/><circle cx="13" cy="4.5" r="2.2" fill="#e8e8e8"/></svg>
<svg class="r" style="left:767px;top:175px;" width="12" height="15" viewBox="0 0 12 15"><path d="M1 1 H11 V14 L6 10 L1 14 Z" fill="none" stroke="#e8e8e8" stroke-width="1.6" stroke-linejoin="round"/></svg>
<div class="r" style="left:795px;top:169px;width:460px;height:28px;background:#1c1d26;border-radius:7px"></div>
<svg class="r" style="left:807px;top:175px;" width="11" height="14" viewBox="0 0 11 14"><path d="M3 6 V4 C3 1.5 8 1.5 8 4 V6" stroke="#a0a2ab" stroke-width="1.6" fill="none"/><rect x="1" y="6" width="9" height="7" rx="1" fill="#a0a2ab"/></svg>
<div class="t" style="left:829px;top:173.2px;height:19.7px;line-height:19.7px;font-size:13.7px;color:#f2f2f2;">localhost<span style="color:#8e909a">:44362</span></div>
<svg class="r" style="left:1154px;top:174px;" width="20" height="18" viewBox="0 0 20 18"><path d="M2 9 V16 H15 V13" stroke="#c8c8cc" stroke-width="1.4" fill="none"/><path d="M5 13 C6 8 10 6.5 13 6.5 V3 L18 8 L13 12.5 V9.5 C10 9.5 7 10.5 5 13 Z" fill="none" stroke="#c8c8cc" stroke-width="1.4" stroke-linejoin="round"/></svg>
<div class="r" style="left:1183px;top:174px;width:1px;height:18px;background:#6a6d78;"></div>
<svg class="r" style="left:1194px;top:173px;" width="18" height="20" viewBox="0 0 18 20"><path d="M3 3 L6 1 H12 L15 3 L17 6 L15 15 L9 19 L3 15 L1 6 Z" fill="#fb542b"/><path d="M6 8 L9 10 L12 8 M7 13 L9 15 L11 13 M9 10 V15" stroke="#fff" stroke-width="1.4" fill="none"/></svg>
<svg class="r" style="left:1227px;top:172px;" width="24" height="22" viewBox="0 0 24 22"><path d="M11 5 L21 20 H1 Z" fill="#9e1f63"/><path d="M11 5 L21 20 H11 Z" fill="#662d91"/><path d="M11 5 L1 20 H8 Z" fill="#ff5000"/><path d="M11 12 L15 18 H7 Z" fill="#fff"/><circle cx="17.5" cy="6" r="5.5" fill="#e5322d"/><text x="17.5" y="9" font-size="8" fill="#fff" text-anchor="middle" font-family="Liberation Sans">7</text></svg>
<svg class="r" style="left:1300px;top:173px;" width="19" height="19" viewBox="0 0 19 19"><path d="M7 1 C9 1 9 3 8.5 4 H13 V8 C14 7.5 16.5 7.5 16.5 10 C16.5 12.5 14 12.5 13 12 V16.5 H9 C9.5 15.5 9.5 13 7 13 C4.5 13 4.5 15.5 5 16.5 H1 V12 C2 12.5 4 12 4 10 C4 8 2 7.5 1 8 V4 H5.5 C5 3 5 1 7 1 Z" fill="#e8e8e8"/></svg>
<svg class="r" style="left:1332px;top:174px;" width="20" height="17" viewBox="0 0 20 17"><path d="M1 2 H13 M1 6.5 H11 M1 11 H8" stroke="#e8e8e8" stroke-width="1.6"/><path d="M14 3 V13" stroke="#e8e8e8" stroke-width="1.6"/><circle cx="12" cy="13.5" r="2.5" fill="#e8e8e8"/><path d="M14 3 L18 2" stroke="#e8e8e8" stroke-width="1.6"/></svg>
<svg class="r" style="left:1365px;top:175px;" width="17" height="15" viewBox="0 0 17 15"><rect x="1" y="1" width="15" height="13" rx="2" fill="none" stroke="#e8e8e8" stroke-width="1.6"/><rect x="2" y="2" width="4" height="11" fill="#e8e8e8"/></svg>
<svg class="r" style="left:1398px;top:175px;" width="20" height="15" viewBox="0 0 20 15"><path d="M3 3 H15 V1.5 H3 C1.5 1.5 1 2.5 1 3.5 V12 C1 13 1.5 14 3 14 H18 V4.5 H2" fill="none" stroke="#e8e8e8" stroke-width="1.5"/><path d="M18 7 H12.5 C11 7 11 11 12.5 11 H18" fill="none" stroke="#e8e8e8" stroke-width="1.5"/></svg>
<svg class="r" style="left:1434px;top:175px;" width="14" height="15" viewBox="0 0 14 15"><path d="M1 2 H13 M1 7.5 H13 M1 13 H13" stroke="#e8e8e8" stroke-width="1.7"/></svg>
<div class="r" style="left:602px;top:201px;width:862px;height:33px;background:#30333e;"></div>
<div class="r" style="left:602px;top:233px;width:862px;height:1px;background:#22242d;"></div>
<svg class="r" style="left:615px;top:208px;" width="17" height="13" viewBox="0 0 17 13"><rect x="0" y="0" width="17" height="13" rx="3.5" fill="#ff0000"/><path d="M6.5 3.5 L11.5 6.5 L6.5 9.5 Z" fill="#fff"/></svg>
<div class="t" style="left:640px;top:206.2px;height:18.5px;line-height:18.5px;font-size:12.5px;color:#ececec;">YouTube</div>
<svg class="r" style="left:703px;top:206px;" width="12" height="17" viewBox="0 0 12 17"><path d="M1 0 H4.5 L7.5 9 V0 H11 V17 C10 16.8 8.5 16.6 7.5 16.6 L4.5 8 V16.8 C3 16.9 2 17 1 17 Z" fill="#e50914"/><path d="M1 0 H4.5 V17 H1 Z" fill="#b1060f"/></svg>
<div class="t" style="left:726px;top:206.2px;height:18.5px;line-height:18.5px;font-size:12.5px;color:#ececec;">Netflix</div>
<svg class="r" style="left:777px;top:206px;" width="17" height="17" viewBox="0 0 17 17"><circle cx="8.5" cy="8.5" r="8.5" fill="#5865f2"/><path d="M4.5 6 C6 4.8 7 4.8 7.5 5.2 H9.5 C10 4.8 11 4.8 12.5 6 C13.5 8 13.5 10 13.2 11.5 C12 12.5 11 12.5 10.5 12.3 L10 11.5 C9 11.8 8 11.8 7 11.5 L6.5 12.3 C6 12.5 5 12.5 3.8 11.5 C3.5 10 3.5 8 4.5 6 Z" fill="#fff"/><circle cx="6.8" cy="9" r="1" fill="#5865f2"/><circle cx="10.2" cy="9" r="1" fill="#5865f2"/></svg>
<div class="t" style="left:801px;top:206.2px;height:18.5px;line-height:18.5px;font-size:12.5px;color:#ececec;">Discord</div>
<svg class="r" style="left:860px;top:207px;" width="12" height="16" viewBox="0 0 12 16"><rect x="0" y="0" width="5" height="5" fill="#f26207"/><rect x="5" y="5" width="6" height="5" fill="#f26207"/><rect x="0" y="10" width="5" height="5" fill="#f26207"/><rect x="0" y="5" width="5" height="5" fill="#f26207" opacity=".4"/></svg>
<div class="t" style="left:882px;top:206.2px;height:18.5px;line-height:18.5px;font-size:12.5px;color:#ececec;">repl.it</div>
<svg class="r" style="left:928px;top:206px;" width="17" height="17" viewBox="0 0 17 17"><rect x="0" y="0" width="17" height="17" fill="#ff5500"/><path d="M3 11 V9 M5 12 V7.5 M7 12 V6.5 M9 12 V6 C11 6 12 7 12.5 8 C14 8 15 9 15 10 C15 11 14 12 13 12 H9" stroke="#fff" stroke-width="1.2" fill="#fff"/></svg>
<div class="t" style="left:952px;top:206.5px;height:18px;line-height:18px;font-size:12px;color:#ececec;">10 bag? by Archie c...</div>
<svg class="r" style="left:1080px;top:206px;" width="18" height="18" viewBox="0 0 18 18"><path d="M4 12 C1 12 1 8 4 8 C4 4 9 3 10.5 6 C13 4.5 16 6 15.5 9 C17.5 9.5 17 12 15 12 Z" fill="none" stroke="#c11111" stroke-width="1.2"/><path d="M6 14 L8 16 M10 14 L12 17" stroke="#c11111" stroke-width="1"/></svg>
<div class="t" style="left:1104px;top:206.7px;height:17.6px;line-height:17.6px;font-size:11.6px;color:#ececec;">TryHackMe | Hackin...</div>
<svg class="r" style="left:1305px;top:209px;" width="12" height="10" viewBox="0 0 12 10"><path d="M1 1 L5 5 L1 9 M6 1 L10 5 L6 9" stroke="#e8e8e8" stroke-width="1.5" fill="none"/></svg>
<div class="r" style="left:1326px;top:206px;width:1px;height:18px;background:#5a5d68;"></div>
<svg class="r" style="left:1337px;top:207px;" width="16" height="14" viewBox="0 0 16 14"><path d="M0 2 C0 1 0.5 0.5 1.5 0.5 H6 L8 2.5 H14.5 C15.5 2.5 16 3 16 4 V12.5 C16 13.5 15.5 14 14.5 14 H1.5 C0.5 14 0 13.5 0 12.5 Z" fill="#f9c623"/><path d="M0 5 H16" stroke="#e0a800" stroke-width=".8"/></svg>
<div class="t" style="left:1361px;top:206.2px;height:18.5px;line-height:18.5px;font-size:12.5px;color:#ececec;letter-spacing:-0.3px">Other bookmarks</div>
<div class="r" style="left:602px;top:234px;width:862px;height:738px;background:#ffffff;"></div>
<div class="r" style="left:602px;top:290px;width:862px;height:1px;background:#dee2e6;"></div>
<div class="r" style="left:602px;top:291px;width:862px;height:12px;background:linear-gradient(rgba(0,0,0,.05),rgba(0,0,0,0))"></div>
<div class="t" style="left:688px;top:249.0px;height:28px;line-height:28px;font-size:20px;color:#212529;">WebApplication1</div>
<div class="t" style="left:863px;top:251.0px;height:24px;line-height:24px;font-size:16px;color:#343a40;">Home</div>
<div class="t" style="left:922px;top:251.0px;height:24px;line-height:24px;font-size:15.2px;color:#343a40;">Privacy</div>
<div class="t" style="left:925px;top:311.0px;height:64px;line-height:64px;font-size:58px;color:#212529;transform:scaleX(0.905);transform-origin:0 0;-webkit-text-stroke:1.9px #fff">Welcome</div>
<div class="t" style="left:853px;top:384.0px;height:22px;line-height:22px;font-size:15.7px;color:#212529;">Learn about <span style="color:#0366d6">building Web apps with ASP.NET Core</span>.</div>
</body></html>
